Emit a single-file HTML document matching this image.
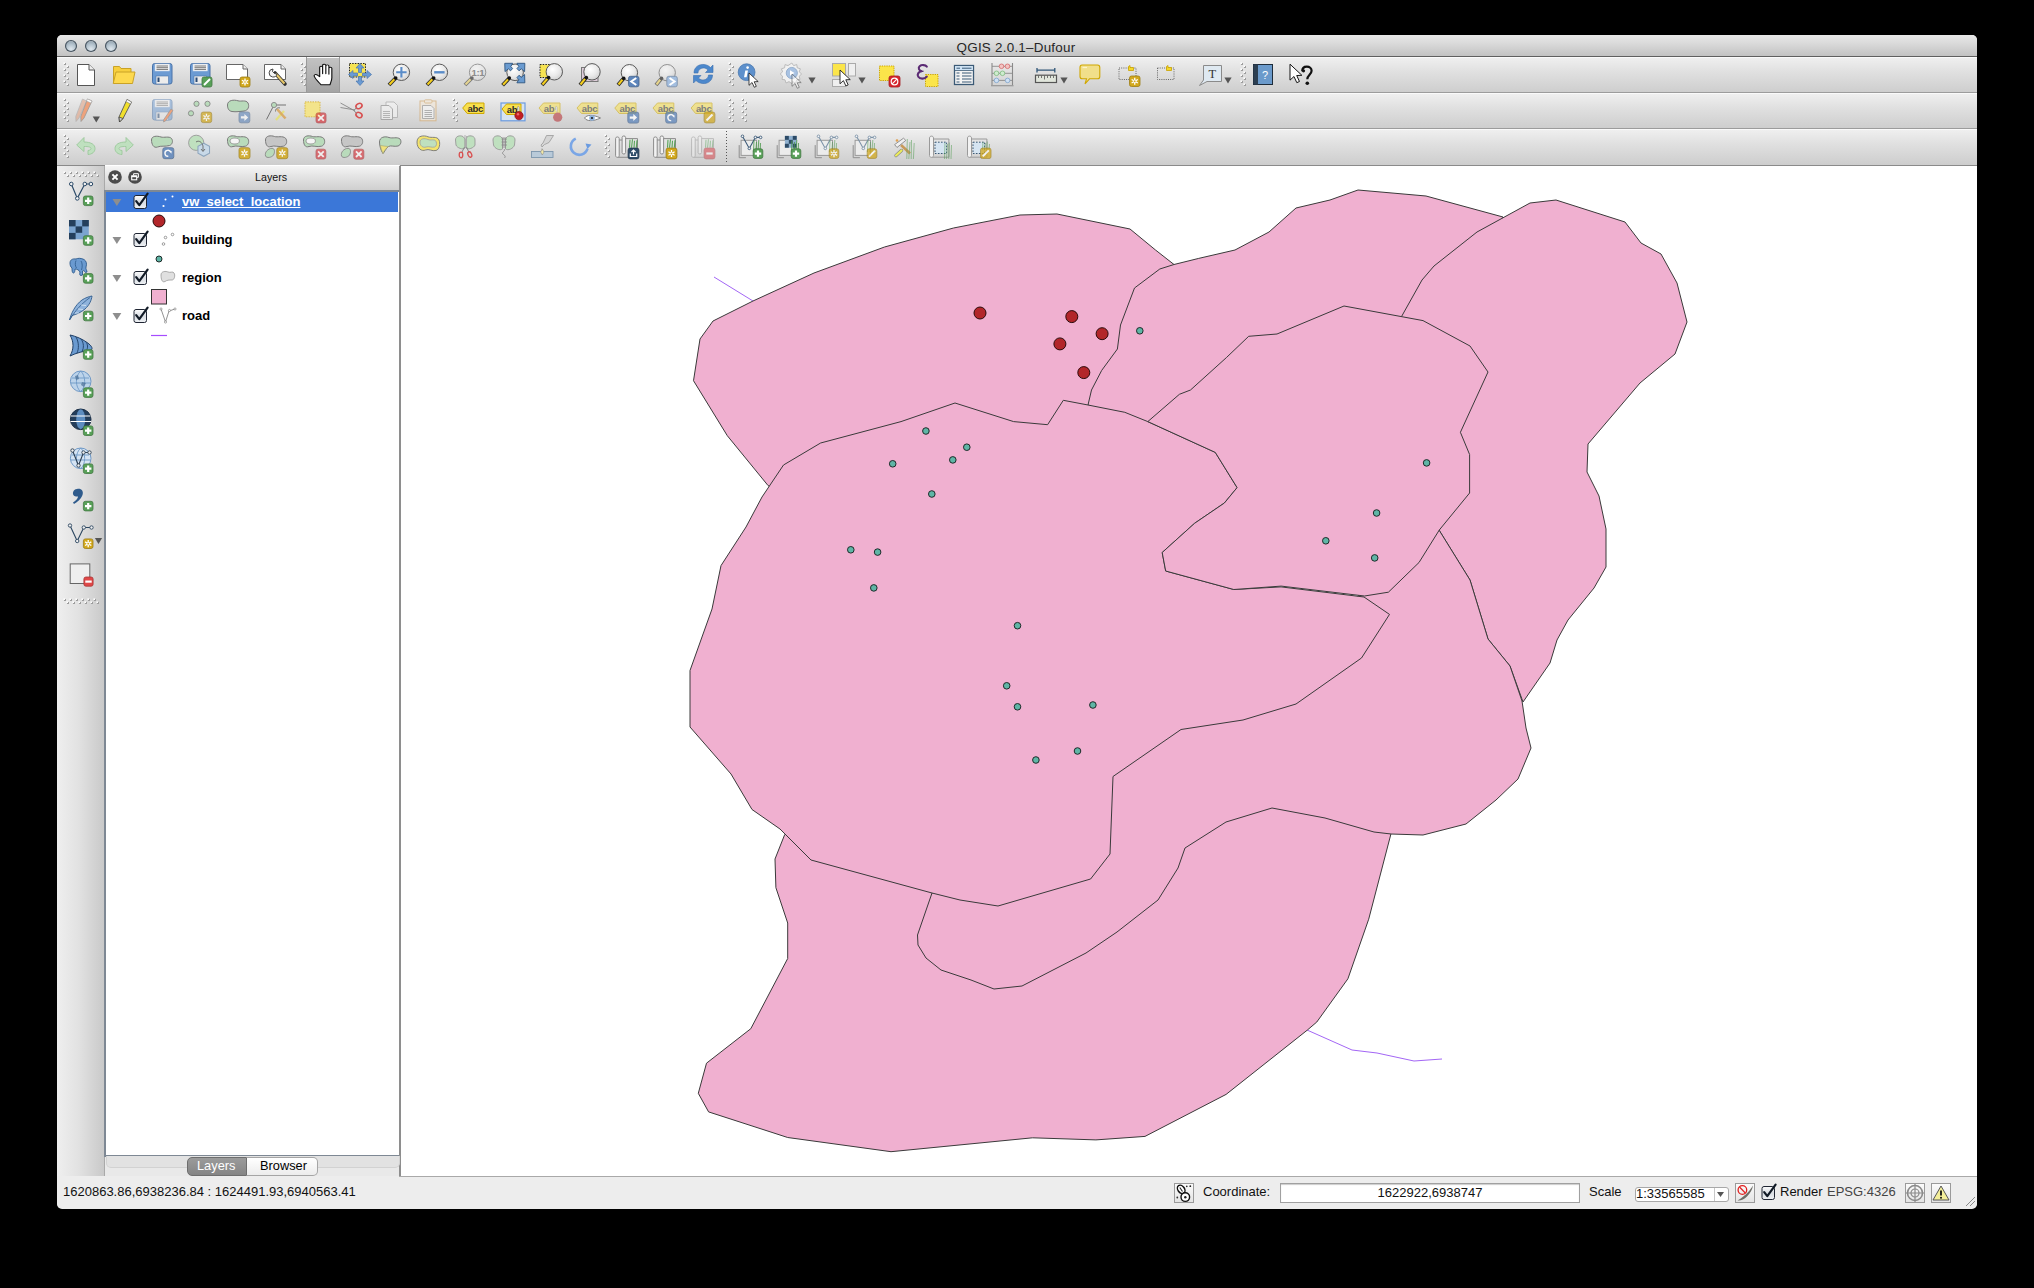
<!DOCTYPE html><html><head><meta charset="utf-8"><style>
html,body{margin:0;padding:0;background:#000;width:2034px;height:1288px;overflow:hidden;font-family:"Liberation Sans",sans-serif;}
.a{position:absolute;}
#win{position:absolute;left:57px;top:35px;width:1920px;height:1173px;background:#e9e9e9;border-radius:5px 5px 5px 5px;overflow:hidden;}
#title{left:57px;top:35px;width:1920px;height:21px;background:linear-gradient(#e8e8e8,#d8d8d8 45%,#c2c2c2);border-bottom:1px solid #5f5f5f;border-radius:5px 5px 0 0;}
#title .t{position:absolute;left:0;width:1918px;top:5px;text-align:center;font-size:13.4px;letter-spacing:0.25px;color:#252525;}
.tl{position:absolute;top:5px;width:12px;height:12px;border-radius:50%;background:radial-gradient(circle at 50% 75%,#dfe7ee 0,#b3c2cd 45%,#8797a4 85%);box-shadow:inset 0 0 0 1.1px #47535e, inset 0 2px 1px -1px #e8f0f4;}
.tb{left:57px;width:1920px;height:35px;background:linear-gradient(#efefef,#e0e0e0 40%,#cdcdcd);border-top:1px solid #fafafa;}
.tbl{left:57px;width:1920px;height:1px;background:#9c9c9c;}
#map{left:401px;top:166px;width:1576px;height:1010px;background:#fff;overflow:hidden;}
#ltb{left:57px;top:166px;width:47px;height:1010px;background:linear-gradient(90deg,#efefef,#e2e2e2 45%,#c9c9c9);}
#dock{left:105px;top:165px;width:295px;height:1011px;background:#e9e9e9;}
#dtitle{left:105px;top:165px;width:294px;height:25px;background:linear-gradient(#f7f7f7,#e6e6e6 40%,#cfcfcf);}
#list{left:104px;top:190px;width:293px;height:963px;background:#fff;border:1px solid #7e8894;border-width:2px 2px 2px 2px;}
#status{left:57px;top:1176px;width:1920px;height:33px;background:#ededed;border-radius:0 0 5px 5px;}
.txt{position:absolute;font-size:13px;color:#111;white-space:nowrap;}
.row{position:absolute;left:182px;font-size:13px;font-weight:bold;color:#000;white-space:nowrap;}
.btn{position:absolute;border:1px solid #9a9a9a;background:linear-gradient(#fbfbfb,#e4e4e4);box-sizing:border-box;}
</style></head><body>
<div id="win"></div>
<div class="a" id="title"><div class="t">QGIS 2.0.1–Dufour</div></div>
<div class="tl" style="left:65px;top:40px"></div>
<div class="tl" style="left:85px;top:40px"></div>
<div class="tl" style="left:105px;top:40px"></div>
<div class="a tb" style="top:57px"></div>
<div class="a tbl" style="top:92px"></div>
<div class="a tb" style="top:93px"></div>
<div class="a tbl" style="top:128px"></div>
<div class="a tb" style="top:129px"></div>
<div class="a" style="left:57px;top:165px;width:1920px;height:1px;background:#8a8a8a"></div>
<div class="a" id="ltb"></div>
<div class="a" style="left:104px;top:166px;width:1px;height:1010px;background:#a9a9a9"></div>
<div class="a" id="dock"></div>
<div class="a" id="dtitle"><div class="txt" style="left:150px;top:6px;font-size:10.7px;">Layers</div></div>
<div class="a" style="left:105px;top:165px;width:294px;height:1px;background:#fff"></div>
<div class="a" id="list"></div>
<div class="a" style="left:106px;top:192px;width:292px;height:20px;background:#3b77d8"></div>
<div class="a" style="left:399px;top:166px;width:2px;height:1011px;background:#8e8e8e"></div>
<div class="a" id="map">
  <svg width="1576" height="1010" viewBox="401 166 1576 1010" style="position:absolute;left:0;top:0">
    <g fill="none" stroke="#a366f5" stroke-width="1">
      <polyline points="714,277 753,301 800,330"/>
      <polyline points="1280,1010 1307,1030 1352,1050 1377,1053 1414,1061 1442,1059"/>
    </g>
    <g fill="#f0b0d0" stroke="#3a3a3a" stroke-width="1" stroke-linejoin="round">
      <polygon points="784.7,834.6 775,859 775.9,887.7 787.7,923 787.7,958.5 750.8,1028.7 706.5,1063.2 698.3,1093.3 708.6,1111.9 787.7,1137.5 891,1151.7 1032.5,1137.8 1095.9,1139.9 1145,1136.4 1226.1,1094.4 1307.2,1030.2 1316.8,1022 1347.9,978.8 1368.7,919.2 1391,833.7 1300,800 1000,860 800,830"/>
      <polygon points="713,321 753,301 814,273 884.5,247 953.5,228 1020,215 1057,214 1130,229 1155.5,250 1174,264.5 1100,450 790,500 768,485.5 727.3,435.7 693.5,380.7 700,339"/>
      <polygon points="1088,405 1091.5,390 1101.7,370.4 1117.4,349 1120.5,325 1134.5,288 1159.8,269 1174,264.5 1198.7,258.4 1235,250 1269,232 1296,208 1330,200 1358,190 1426,196 1503,217 1480,300 1300,380 1150,440"/>
      <polygon points="1401.5,316.6 1422,280 1434,266 1477,232 1530,203 1556,200 1625,222 1641,243 1661,254 1677,283 1687,322 1675,354 1640,383 1588,444 1587,472 1599,496 1606,529 1606,567 1594,588 1568,620 1557,640 1550,663 1523,702 1510,666 1488,639 1470,580 1439,530 1400,450 1390,340"/>
      <polygon points="1439,530 1470,580 1488,639 1510,666 1522,701 1526,728 1531,748 1518,779 1496,800 1466,824 1423,835 1391,834 1374,832 1325,818 1272,808 1226,822 1185,848 1178,868 1158,900 1117,932 1086,953 1022,986 994,989 971,980 941,970 926,958 918,945 917.5,935 932,893 1000,870 1080,760 1250,690 1330,620 1400,560"/>
      <polygon points="1147.8,421.6 1215.3,452.4 1237.1,487.6 1224.4,503 1194.6,523.3 1162.2,552.5 1165.7,571 1233.8,589.5 1281,586.9 1364,597 1389.5,614.4 1361.5,658 1296,704 1243,720 1181,729.5 1113,776.5 1110,854 1090.6,879 998,906 960,900 932,893 811,860 780,829 752,809.5 731,774 690,727 690,670.5 712,609 721,565.6 746,527 762,497 783.5,465 820.6,443 901,421.6 955,403 1013.6,421.6 1047.6,424.7 1063.3,400.3 1088,405 1124.8,412.3"/>
      <polygon points="1147.8,421.6 1179.4,394.3 1190.5,390 1226.4,357.6 1248.7,336.3 1277,334 1344,306 1423,320.6 1470,346 1488,372 1460.4,432.3 1469.6,454.5 1469.6,493 1439.3,530 1419,562.5 1388.4,592.2 1364.5,596 1281.2,586.1 1233.8,589.5 1165.7,571 1162.2,552.5 1194.6,523.3 1224.4,503 1237.1,487.6 1215.3,452.4"/>
    </g>
    <g fill="#5fb5a6" stroke="#1e2a28" stroke-width="1">
      <circle cx="1139.8" cy="330.8" r="3.3"/><circle cx="925.9" cy="431" r="3.3"/><circle cx="966.8" cy="447.2" r="3.3"/>
      <circle cx="892.7" cy="463.8" r="3.3"/><circle cx="952.8" cy="459.9" r="3.3"/><circle cx="931.8" cy="494" r="3.3"/>
      <circle cx="850.8" cy="549.8" r="3.3"/><circle cx="877.6" cy="552.1" r="3.3"/><circle cx="873.8" cy="587.9" r="3.3"/>
      <circle cx="1017.5" cy="625.7" r="3.3"/><circle cx="1006.7" cy="685.8" r="3.3"/><circle cx="1017.5" cy="706.8" r="3.3"/>
      <circle cx="1092.9" cy="705" r="3.3"/><circle cx="1077.5" cy="751" r="3.3"/><circle cx="1035.9" cy="760" r="3.3"/>
      <circle cx="1426.6" cy="462.9" r="3.3"/><circle cx="1376.6" cy="513" r="3.3"/><circle cx="1325.8" cy="540.8" r="3.3"/>
      <circle cx="1374.7" cy="557.9" r="3.3"/>
    </g>
    <g fill="#b2262a" stroke="#2a0a0a" stroke-width="1">
      <circle cx="980" cy="313" r="6"/><circle cx="1071.8" cy="316.6" r="6"/><circle cx="1102.1" cy="333.7" r="6"/>
      <circle cx="1059.9" cy="343.9" r="6"/><circle cx="1083.8" cy="372.6" r="6"/>
    </g>
  </svg>
</div>
<div class="a" style="left:106px;top:1156px;width:292px;height:11px;background:#e2e2e2;border:1px solid #d2d2d2;border-top:none;border-radius:0 0 5px 5px;"></div>
<div class="a" style="left:187px;top:1157px;width:60px;height:19px;background:linear-gradient(#9b9b9b,#858585);border:1px solid #6e6e6e;border-radius:5px 0 0 5px;box-sizing:border-box;"></div>
<div class="a" style="left:247px;top:1157px;width:71px;height:19px;background:linear-gradient(#ffffff,#ececec);border:1px solid #a5a5a5;border-left:none;border-radius:0 5px 5px 0;box-sizing:border-box;"></div>
<div class="txt" style="left:197px;top:1158px;color:#fff;font-size:12.8px;">Layers</div>
<div class="txt" style="left:260px;top:1158px;color:#000;font-size:12.8px;">Browser</div>
<div class="a" id="status"></div>
<div class="a" style="left:399px;top:1176px;width:1578px;height:1px;background:#a9a9a9"></div>
<div class="txt" style="left:63px;top:1184px;">1620863.86,6938236.84 : 1624491.93,6940563.41</div>
<div class="btn" style="left:1174px;top:1183px;width:20px;height:20px;"></div>
<div class="txt" style="left:1203px;top:1184px;">Coordinate:</div>
<div class="a" style="left:1280px;top:1183px;width:300px;height:20px;background:#fff;border:1px solid #a0a0a0;box-sizing:border-box;box-shadow:inset 0 1px 1px #ccc;"></div>
<div class="txt" style="left:1280px;width:300px;text-align:center;top:1185px;">1622922,6938747</div>
<div class="txt" style="left:1589px;top:1184px;">Scale</div>
<div class="a" style="left:1635px;top:1187px;width:94px;height:15px;background:#fff;border:1px solid #a8a8a8;border-radius:3px;box-sizing:border-box;"></div>
<div class="a" style="left:1714px;top:1188px;width:1px;height:13px;background:#c8c8c8"></div>
<div class="txt" style="left:1636px;top:1186px;font-size:13px;">1:33565585</div>
<div class="btn" style="left:1735px;top:1183px;width:20px;height:20px;"></div>
<div class="txt" style="left:1780px;top:1184px;">Render</div>
<div class="txt" style="left:1827px;top:1184px;color:#444;">EPSG:4326</div>
<div class="btn" style="left:1905px;top:1183px;width:20px;height:20px;"></div>
<div class="btn" style="left:1931px;top:1183px;width:20px;height:20px;"></div>
<div class="row" style="top:194px;color:#fff;text-decoration:underline;">vw_select_location</div>
<div class="row" style="top:232px;">building</div>
<div class="row" style="top:270px;">region</div>
<div class="row" style="top:308px;">road</div>
<svg class="a" style="left:0;top:0" width="2034" height="1288" viewBox="0 0 2034 1288" overflow="visible">
<defs><radialGradient id="lensg" cx="0.4" cy="0.35" r="0.7"><stop offset="0" stop-color="#ffffff"/><stop offset="0.6" stop-color="#e9e9e9"/><stop offset="1" stop-color="#cfcfcf"/></radialGradient><linearGradient id="pressg" x1="0" y1="0" x2="0" y2="1"><stop offset="0" stop-color="#c2c2c2"/><stop offset="1" stop-color="#a4a4a4"/></linearGradient><linearGradient id="chkg" x1="0" y1="0" x2="0" y2="1"><stop offset="0" stop-color="#fdfdfd"/><stop offset="0.5" stop-color="#d9dde3"/><stop offset="1" stop-color="#eef1f4"/></linearGradient></defs>
<rect x="64" y="63" width="2" height="2" fill="#9d9d9d"/><rect x="63.4" y="62.4" width="1.6" height="1.6" fill="#fdfdfd"/><rect x="67" y="66" width="2" height="2" fill="#9d9d9d"/><rect x="66.4" y="65.4" width="1.6" height="1.6" fill="#fdfdfd"/><rect x="64" y="69" width="2" height="2" fill="#9d9d9d"/><rect x="63.4" y="68.4" width="1.6" height="1.6" fill="#fdfdfd"/><rect x="67" y="72" width="2" height="2" fill="#9d9d9d"/><rect x="66.4" y="71.4" width="1.6" height="1.6" fill="#fdfdfd"/><rect x="64" y="75" width="2" height="2" fill="#9d9d9d"/><rect x="63.4" y="74.4" width="1.6" height="1.6" fill="#fdfdfd"/><rect x="67" y="78" width="2" height="2" fill="#9d9d9d"/><rect x="66.4" y="77.4" width="1.6" height="1.6" fill="#fdfdfd"/><rect x="64" y="81" width="2" height="2" fill="#9d9d9d"/><rect x="63.4" y="80.4" width="1.6" height="1.6" fill="#fdfdfd"/><rect x="67" y="84" width="2" height="2" fill="#9d9d9d"/><rect x="66.4" y="83.4" width="1.6" height="1.6" fill="#fdfdfd"/><g transform="translate(74,62)"><path d="M3.5 2.5H15L20.5 8V23.5H3.5Z" fill="#fff" stroke="#555" stroke-width="1"/><path d="M15 2.5V8H20.5" fill="#eee" stroke="#555" stroke-width="1"/></g>
<g transform="translate(112,62)"><path d="M1.5 21V4.5H7.5L9 6.5H19V10" fill="#f7cf3e" stroke="#c9a227" stroke-width="1"/><path d="M4 10H23L20.5 21.5H1.2Z" fill="#fdd94f" stroke="#c9a227" stroke-width="1"/></g>
<g transform="translate(150,62)"><rect x="2.5" y="1.5" width="19.5" height="20.5" rx="2.2" fill="#6c9bd3" stroke="#4a73a8" stroke-width="1"/><rect x="5" y="2" width="14.5" height="7" fill="#f4f4f4" stroke="#c9d6e5" stroke-width="0.5"/><path d="M6.5 4H18M6.5 5.7H18M6.5 7.4H18" stroke="#555" stroke-width="0.8"/><rect x="6" y="14" width="12.5" height="8" fill="#ececec" stroke="#4a73a8" stroke-width="0.6"/><rect x="7.5" y="15.5" width="2" height="4.5" fill="#2a4a75"/></g>
<g transform="translate(188,62)"><rect x="2.5" y="1.5" width="19.5" height="20.5" rx="2.2" fill="#6c9bd3" stroke="#4a73a8" stroke-width="1"/><rect x="5" y="2" width="14.5" height="7" fill="#f4f4f4" stroke="#c9d6e5" stroke-width="0.5"/><path d="M6.5 4H18M6.5 5.7H18M6.5 7.4H18" stroke="#555" stroke-width="0.8"/><rect x="6" y="14" width="12.5" height="8" fill="#ececec" stroke="#4a73a8" stroke-width="0.6"/><rect x="7.5" y="15.5" width="2" height="4.5" fill="#2a4a75"/><rect x="14" y="15" width="10" height="10" rx="2" fill="#58a058" stroke="#427842" stroke-width="0.8"/><path d="M16.0 23.0L22.0 17.0" stroke="#fff" stroke-width="2"/></g>
<g transform="translate(225,62)"><path d="M1.5 2.5H18L22.5 7V17.5H1.5Z" fill="#fff" stroke="#666" stroke-width="1"/><path d="M18 2.5V7H22.5" fill="#eee" stroke="#666" stroke-width="1"/><rect x="15" y="15" width="10" height="10" rx="2" fill="#d2a81c" stroke="#9d7e15" stroke-width="0.8"/><path d="M20.0 16.4V23.6M16.9 18.2L23.1 21.8M16.9 21.8L23.1 18.2" stroke="#fff" stroke-width="1.3"/><circle cx="20.0" cy="20.0" r="1.3" fill="#d2a81c" stroke="#fff" stroke-width="0.8"/></g>
<g transform="translate(263,62)"><path d="M1.5 2.5H18L22.5 7V17.5H1.5Z" fill="#fff" stroke="#666" stroke-width="1"/><path d="M18 2.5V7H22.5" fill="#eee" stroke="#666" stroke-width="1"/><path d="M12 11L22 22" stroke="#333" stroke-width="3.6" stroke-linecap="round"/><path d="M12.5 11.5L21.5 21.5" stroke="#e8c96a" stroke-width="2"/><path d="M14 12A4 4 0 1 1 10 7L9.5 9.5L11.5 11.5L14 12Z" fill="#f3f3f3" stroke="#444" stroke-width="1"/></g>
<rect x="301" y="63" width="2" height="2" fill="#9d9d9d"/><rect x="300.4" y="62.4" width="1.6" height="1.6" fill="#fdfdfd"/><rect x="304" y="66" width="2" height="2" fill="#9d9d9d"/><rect x="303.4" y="65.4" width="1.6" height="1.6" fill="#fdfdfd"/><rect x="301" y="69" width="2" height="2" fill="#9d9d9d"/><rect x="300.4" y="68.4" width="1.6" height="1.6" fill="#fdfdfd"/><rect x="304" y="72" width="2" height="2" fill="#9d9d9d"/><rect x="303.4" y="71.4" width="1.6" height="1.6" fill="#fdfdfd"/><rect x="301" y="75" width="2" height="2" fill="#9d9d9d"/><rect x="300.4" y="74.4" width="1.6" height="1.6" fill="#fdfdfd"/><rect x="304" y="78" width="2" height="2" fill="#9d9d9d"/><rect x="303.4" y="77.4" width="1.6" height="1.6" fill="#fdfdfd"/><rect x="301" y="81" width="2" height="2" fill="#9d9d9d"/><rect x="300.4" y="80.4" width="1.6" height="1.6" fill="#fdfdfd"/><rect x="304" y="84" width="2" height="2" fill="#9d9d9d"/><rect x="303.4" y="83.4" width="1.6" height="1.6" fill="#fdfdfd"/><rect x="306" y="58" width="34" height="34" fill="url(#pressg)"/><rect x="306" y="57" width="1" height="35" fill="#9a9a9a"/><rect x="339" y="57" width="1" height="35" fill="#9a9a9a"/>
<g transform="translate(311,62)"><path transform="translate(1,0.8) scale(1.28,1.0)" d="M7 22C5 19 2.5 16 1.8 13.5C1.2 11.8 3 11 4.3 12.3L6 14V4.5C6 3 8.3 3 8.3 4.5V11V2.5C8.3 1 10.8 1 10.8 2.5V11V3.2C10.8 1.7 13.2 1.7 13.2 3.2V11.5V5.5C13.2 4 15.5 4 15.5 5.5V15C15.5 18 14.5 20 14 22Z" fill="#fff" stroke="#111" stroke-width="0.9" stroke-linejoin="round"/></g>
<g transform="translate(348,62)"><rect x="1.5" y="1.5" width="16" height="13.5" fill="#f6e352" stroke="#222" stroke-width="1" stroke-dasharray="1.5 1.2"/><path d="M12 1.5L16 6H13.5V10.5H10.5V6H8Z M12 23.5L16 19H13.5V14.5H10.5V19H8Z M0.5 12.5L5 8.5V11H9.5V14H5V16.5Z M23.5 12.5L19 8.5V11H14.5V14H19V16.5Z" fill="#6a9bd3" stroke="#4a76ad" stroke-width="0.7"/></g>
<g transform="translate(386,62)"><line x1="9.988" y1="15.712" x2="3" y2="23" stroke="#2a2a2a" stroke-width="3.8"/><line x1="8.388" y1="17.312" x2="3.5" y2="22.5" stroke="#f5cf1f" stroke-width="2.1"/><circle cx="15.4" cy="10.3" r="8.2" fill="url(#lensg)" stroke="#5a5a5a" stroke-width="1"/><circle cx="9.788" cy="15.911999999999999" r="1.7" fill="#111"/><path d="M10.2 10.3H20.6M15.4 5.1V15.5" stroke="#5a8cc8" stroke-width="2.1"/></g>
<g transform="translate(424,62)"><line x1="9.988" y1="15.712" x2="3" y2="23" stroke="#2a2a2a" stroke-width="3.8"/><line x1="8.388" y1="17.312" x2="3.5" y2="22.5" stroke="#f5cf1f" stroke-width="2.1"/><circle cx="15.4" cy="10.3" r="8.2" fill="url(#lensg)" stroke="#5a5a5a" stroke-width="1"/><circle cx="9.788" cy="15.911999999999999" r="1.7" fill="#111"/><path d="M10.2 10.3H20.6" stroke="#5a8cc8" stroke-width="2.4"/></g>
<g transform="translate(462,62)"><g opacity="0.55"><line x1="10.187999999999999" y1="15.712" x2="3" y2="23" stroke="#2a2a2a" stroke-width="3.8"/><line x1="8.588" y1="17.312" x2="3.5" y2="22.5" stroke="#f2d35a" stroke-width="2.1"/><circle cx="15.6" cy="10.3" r="8.2" fill="url(#lensg)" stroke="#5a5a5a" stroke-width="1"/><circle cx="9.988" cy="15.911999999999999" r="1.7" fill="#111"/></g><text x="9.6" y="14.2" font-family="Liberation Sans" font-weight="bold" font-size="9.6" fill="#8c8c8c" letter-spacing="-0.4">1:1</text></g>
<g transform="translate(501,62)"><line x1="8.622" y1="15.778000000000002" x2="1.6" y2="23.2" stroke="#2a2a2a" stroke-width="3.8"/><line x1="7.022" y1="17.378000000000004" x2="2.1" y2="22.7" stroke="#f5cf1f" stroke-width="2.1"/><circle cx="14.1" cy="10.3" r="8.3" fill="url(#lensg)" stroke="#5a5a5a" stroke-width="1"/><circle cx="8.422" cy="15.978000000000002" r="1.7" fill="#111"/><path d="M3.75 1.3H11.7L9.8 4.5L11.6 6.5L9.6 8.8L7.3 6.8L4 9.6Z M23.85 1.3H15.9L17.8 4.5L16 6.5L18 8.8L20.3 6.8L23.6 9.6Z M23.85 20.8H15.9L17.8 17.6L16 15.6L18 13.3L20.3 15.3L23.6 12.5Z" fill="#6a9bd0" stroke="#2f5680" stroke-width="0.9" stroke-linejoin="round"/></g>
<g transform="translate(539,62)"><rect x="1" y="2.5" width="18.5" height="13" fill="#f6e352" stroke="#222" stroke-width="1" stroke-dasharray="1.5 1.2"/><line x1="9.888000000000002" y1="15.212" x2="3" y2="23" stroke="#2a2a2a" stroke-width="3.8"/><line x1="8.288000000000002" y1="16.812" x2="3.5" y2="22.5" stroke="#f5cf1f" stroke-width="2.1"/><circle cx="15.3" cy="9.8" r="8.2" fill="url(#lensg)" stroke="#5a5a5a" stroke-width="1"/><circle cx="9.688000000000002" cy="15.411999999999999" r="1.7" fill="#111"/></g>
<g transform="translate(577,62)"><rect x="4.5" y="5.5" width="16.5" height="14" fill="#dccbd8" stroke="#777" stroke-width="1"/><line x1="9.588000000000001" y1="15.212" x2="3" y2="23" stroke="#2a2a2a" stroke-width="3.8"/><line x1="7.988000000000001" y1="16.812" x2="3.5" y2="22.5" stroke="#f5cf1f" stroke-width="2.1"/><circle cx="15" cy="9.8" r="8.2" fill="url(#lensg)" stroke="#5a5a5a" stroke-width="1"/><circle cx="9.388000000000002" cy="15.411999999999999" r="1.7" fill="#111"/></g>
<g transform="translate(615,62)"><line x1="8.988" y1="16.112" x2="3" y2="23" stroke="#2a2a2a" stroke-width="3.8"/><line x1="7.388" y1="17.712" x2="3.5" y2="22.5" stroke="#f5cf1f" stroke-width="2.1"/><circle cx="14.4" cy="10.7" r="8.2" fill="url(#lensg)" stroke="#5a5a5a" stroke-width="1"/><circle cx="8.788" cy="16.311999999999998" r="1.7" fill="#111"/><rect x="13.5" y="14.3" width="10.5" height="10.5" rx="2" fill="#5d85bb" stroke="#45638c" stroke-width="0.8"/><path d="M21.25 16.05L16.25 19.55L21.25 23.05" fill="none" stroke="#fff" stroke-width="2"/></g>
<g transform="translate(653,62)"><g opacity="0.6"><line x1="8.788" y1="16.112" x2="3" y2="23" stroke="#2a2a2a" stroke-width="3.8"/><line x1="7.188000000000001" y1="17.712" x2="3.5" y2="22.5" stroke="#f2d35a" stroke-width="2.1"/><circle cx="14.2" cy="10.7" r="8.2" fill="url(#lensg)" stroke="#5a5a5a" stroke-width="1"/><circle cx="8.588000000000001" cy="16.311999999999998" r="1.7" fill="#111"/></g><rect x="13.8" y="14.3" width="10.5" height="10.5" rx="2" fill="#a3bedf" stroke="#7a8ea7" stroke-width="0.8"/><path d="M16.55 16.05L21.55 19.55L16.55 23.05" fill="none" stroke="#fff" stroke-width="2"/></g>
<g transform="translate(691,62)"><path d="M3 11C3 5 8 2 13 2.5C16 2.8 18 4 19.5 5.5L22 3V10.5H14.5L17 8C15.5 6.5 14 6 12.5 6C9 6 7 8.5 7 11Z" fill="#4c88cc" stroke="#3a6fb0" stroke-width="0.6"/><path d="M21.5 13C21.5 19 16.5 22 11.5 21.5C8.5 21.2 6.5 20 5 18.5L2.5 21V13.5H10L7.5 16C9 17.5 10.5 18 12 18C15.5 18 17.5 15.5 17.5 13Z" fill="#4c88cc" stroke="#3a6fb0" stroke-width="0.6"/></g>
<rect x="729" y="63" width="2" height="2" fill="#9d9d9d"/><rect x="728.4" y="62.4" width="1.6" height="1.6" fill="#fdfdfd"/><rect x="732" y="66" width="2" height="2" fill="#9d9d9d"/><rect x="731.4" y="65.4" width="1.6" height="1.6" fill="#fdfdfd"/><rect x="729" y="69" width="2" height="2" fill="#9d9d9d"/><rect x="728.4" y="68.4" width="1.6" height="1.6" fill="#fdfdfd"/><rect x="732" y="72" width="2" height="2" fill="#9d9d9d"/><rect x="731.4" y="71.4" width="1.6" height="1.6" fill="#fdfdfd"/><rect x="729" y="75" width="2" height="2" fill="#9d9d9d"/><rect x="728.4" y="74.4" width="1.6" height="1.6" fill="#fdfdfd"/><rect x="732" y="78" width="2" height="2" fill="#9d9d9d"/><rect x="731.4" y="77.4" width="1.6" height="1.6" fill="#fdfdfd"/><rect x="729" y="81" width="2" height="2" fill="#9d9d9d"/><rect x="728.4" y="80.4" width="1.6" height="1.6" fill="#fdfdfd"/><rect x="732" y="84" width="2" height="2" fill="#9d9d9d"/><rect x="731.4" y="83.4" width="1.6" height="1.6" fill="#fdfdfd"/><g transform="translate(735,62)"><circle cx="11.6" cy="10.2" r="8.4" fill="#5d90cc" stroke="#4a78b0" stroke-width="0.8"/><path d="M10.3 8.5H13L11.6 15.2H9Z" fill="#fff"/><circle cx="12.6" cy="5.6" r="1.3" fill="#fff"/><path transform="translate(14,11) scale(0.85)" d="M0 0L0 14.5L3.6 11.2L6.2 16.8L8.6 15.7L6.1 10.3L10.8 10.1Z" fill="#fff" stroke="#111" stroke-width="0.9" stroke-linejoin="round"/></g>
<g transform="translate(780,62)"><path d="M11.8 1L13.6 3.6L16.8 2.6L17.2 5.8L20.4 6.8L19.2 9.8L21.6 12L19.2 14.2L20 17.4L16.8 17.8L15.6 21L12.6 19.6L11.8 21.6L9 19.6L6 21L5 17.8L2 17.4L2.6 14.2L0.2 12L2.6 9.8L1.4 6.8L4.6 5.8L5 2.6L8 3.6Z" fill="#f1f1f1" stroke="#b5b5b5" stroke-width="0.9"/><circle cx="11.8" cy="11" r="5.6" fill="#a8c2e2" stroke="#8aa6c8" stroke-width="0.8"/><path d="M10 8.2L14.5 11L10 13.8Z" fill="#fff"/><g opacity="0.5"><path transform="translate(12,12) scale(0.85)" d="M0 0L0 14.5L3.6 11.2L6.2 16.8L8.6 15.7L6.1 10.3L10.8 10.1Z" fill="#fff" stroke="#111" stroke-width="0.9" stroke-linejoin="round"/></g></g>
<path d="M808.4 77.4H815.6L812 83.4Z" fill="#555"/><g transform="translate(831,62)"><rect x="1.5" y="1.5" width="13" height="12.5" fill="#fbe54a" stroke="#aaa" stroke-width="1"/><rect x="17.5" y="1.5" width="7" height="12.5" fill="#efefef" stroke="#aaa" stroke-width="1"/><rect x="1.5" y="17.5" width="13" height="7" fill="#efefef" stroke="#aaa" stroke-width="1"/><path transform="translate(9,8) scale(0.95)" d="M0 0L0 14.5L3.6 11.2L6.2 16.8L8.6 15.7L6.1 10.3L10.8 10.1Z" fill="#fff" stroke="#111" stroke-width="0.9" stroke-linejoin="round"/></g>
<path d="M858.4 77.4H865.6L862 83.4Z" fill="#555"/><g transform="translate(877,62)"><rect x="2.5" y="4" width="14.5" height="14.5" fill="#fbe54a" stroke="#cda600" stroke-width="1" stroke-dasharray="1.3 1"/><rect x="12" y="14" width="11" height="11" rx="2" fill="#d8262e" stroke="#a21c22" stroke-width="0.8"/><circle cx="17.5" cy="19.5" r="3.3" fill="none" stroke="#fff" stroke-width="1.2"/><path d="M15.2 21.8L19.8 17.2" stroke="#fff" stroke-width="1.2"/></g>
<g transform="translate(915,62)"><rect x="10.5" y="12.5" width="12.5" height="12" fill="#fbe54a" stroke="#cda600" stroke-width="1" stroke-dasharray="1.3 1"/><path d="M11.8 4.6C10.5 2.8 6.5 2.5 4.6 4.2C3 5.7 3.8 8.6 6.8 9.3C3.2 9.8 1.8 12.5 3.3 14.8C5 17.3 9.8 17.2 11.8 14.6" fill="none" stroke="#5b2b74" stroke-width="2.1" stroke-linecap="round"/><path d="M6.5 9.3H8.5" stroke="#5b2b74" stroke-width="1.4"/></g>
<g transform="translate(952,62)"><rect x="2.5" y="3.5" width="19" height="19" fill="#f4f4f4" stroke="#3b5a76" stroke-width="1.3"/><rect x="3.2" y="4.2" width="17.6" height="4" fill="#cde3f6"/><path d="M4.5 6.2H8M10 6.2H19.5M4.5 11H7.5M10 11H19.5M4.5 14H7.5M10 14H19.5M4.5 17H7.5M10 17H19.5M4.5 20H7.5M10 20H19.5" stroke="#3b5a76" stroke-width="1"/><path d="M3 8.5H21" stroke="#3b5a76" stroke-width="0.8"/></g>
<g transform="translate(990,62)"><path d="M2 1V23M22.5 1V23M1 23.8H23.5" stroke="#8a8a8a" stroke-width="1.1" fill="none"/><path d="M2 4.3H22.5M2 11.3H22.5M2 18.4H22.5" stroke="#8a8a8a" stroke-width="0.9"/><circle cx="11.5" cy="4.3" r="2.3" fill="#f3c4c4" stroke="#d46a6a" stroke-width="0.8"/><circle cx="17.5" cy="4.3" r="2.3" fill="#f3c4c4" stroke="#d46a6a" stroke-width="0.8"/><circle cx="6.5" cy="11.3" r="2.3" fill="#cfeccf" stroke="#7fba7f" stroke-width="0.8"/><circle cx="12.5" cy="11.3" r="2.3" fill="#cfeccf" stroke="#7fba7f" stroke-width="0.8"/><circle cx="6.5" cy="18.4" r="2.3" fill="#cfe0f3" stroke="#7ea3cc" stroke-width="0.8"/><circle cx="17.6" cy="18.4" r="2.3" fill="#cfe0f3" stroke="#7ea3cc" stroke-width="0.8"/></g>
<g transform="translate(1034,62)"><path d="M3 6V10.5M20.8 6V10.5M3 8.2H20.8" stroke="#2f5577" stroke-width="1.3"/><rect x="1.5" y="13.2" width="21" height="7.3" fill="#e1e6dc" stroke="#555" stroke-width="1.2"/><path d="M4.5 13.5V16M7.5 13.5V16M10.5 13.5V17.5M13.5 13.5V16M16.5 13.5V16M19.5 13.5V16" stroke="#555" stroke-width="0.8"/></g>
<path d="M1060.4 77.4H1067.6L1064 83.4Z" fill="#555"/><g transform="translate(1078,62)"><path d="M4 3H19.5C21 3 21.8 4 21.8 5.5V14.5C21.8 16 21 16.8 19.5 16.8H11.5L7 22L8.5 16.8H4.5C3 16.8 2 16 2 14.5V5.5C2 4 3 3 4 3Z" fill="#f1df8a" stroke="#d0a700" stroke-width="1.1"/><path d="M4.5 5.5H9" stroke="#fff8d8" stroke-width="1.3" opacity="0.8"/></g>
<g transform="translate(1117,62)"><rect x="2" y="6" width="17" height="11.5" fill="none" stroke="#666" stroke-width="1" stroke-dasharray="1 1.2"/><path d="M11.5 8.5V4.5L13 3.5V5.5H16.5V8.5Z" fill="#f4d82a" stroke="#c9a200" stroke-width="0.8"/><rect x="12.5" y="14" width="10.5" height="10.5" rx="2" fill="#d2a81c" stroke="#9d7e15" stroke-width="0.8"/><path d="M17.75 15.65V22.85M14.65 17.45L20.85 21.05M14.65 21.05L20.85 17.45" stroke="#fff" stroke-width="1.3"/><circle cx="17.75" cy="19.25" r="1.3" fill="#d2a81c" stroke="#fff" stroke-width="0.8"/></g>
<g transform="translate(1155,62)"><rect x="2.5" y="6" width="16.5" height="11.5" fill="none" stroke="#666" stroke-width="1" stroke-dasharray="1 1.2"/><path d="M11.5 8.5V4.5L13 3.5V5.5H16.5V8.5Z" fill="#f4d82a" stroke="#c9a200" stroke-width="0.8"/></g>
<g transform="translate(1199,62)"><path d="M4.5 3.5H22.5V19.5H8L0.5 23.5L4.5 18Z" fill="#dfe9f1" stroke="#8a8a8a" stroke-width="1"/><text x="9.5" y="16" font-family="Liberation Serif" font-size="12.5" fill="#333">T</text></g>
<path d="M1224.4 77.4H1231.6L1228 83.4Z" fill="#555"/><rect x="1241" y="63" width="2" height="2" fill="#9d9d9d"/><rect x="1240.4" y="62.4" width="1.6" height="1.6" fill="#fdfdfd"/><rect x="1244" y="66" width="2" height="2" fill="#9d9d9d"/><rect x="1243.4" y="65.4" width="1.6" height="1.6" fill="#fdfdfd"/><rect x="1241" y="69" width="2" height="2" fill="#9d9d9d"/><rect x="1240.4" y="68.4" width="1.6" height="1.6" fill="#fdfdfd"/><rect x="1244" y="72" width="2" height="2" fill="#9d9d9d"/><rect x="1243.4" y="71.4" width="1.6" height="1.6" fill="#fdfdfd"/><rect x="1241" y="75" width="2" height="2" fill="#9d9d9d"/><rect x="1240.4" y="74.4" width="1.6" height="1.6" fill="#fdfdfd"/><rect x="1244" y="78" width="2" height="2" fill="#9d9d9d"/><rect x="1243.4" y="77.4" width="1.6" height="1.6" fill="#fdfdfd"/><rect x="1241" y="81" width="2" height="2" fill="#9d9d9d"/><rect x="1240.4" y="80.4" width="1.6" height="1.6" fill="#fdfdfd"/><rect x="1244" y="84" width="2" height="2" fill="#9d9d9d"/><rect x="1243.4" y="83.4" width="1.6" height="1.6" fill="#fdfdfd"/><g transform="translate(1251,62)"><rect x="2.5" y="2.5" width="19" height="20" fill="#6b9acb" stroke="#1e2c3a" stroke-width="1"/><rect x="2.5" y="2.5" width="4.5" height="20" fill="#2c3f52"/><text x="11" y="17" font-family="Liberation Sans" font-size="11" fill="#fff">?</text></g>
<g transform="translate(1289,62)"><path transform="translate(1,2.2) scale(1.1)" d="M0 0L0 14.5L3.6 11.2L6.2 16.8L8.6 15.7L6.1 10.3L10.8 10.1Z" fill="#fff" stroke="#111" stroke-width="0.9" stroke-linejoin="round"/><path d="M13.2 9.2C13.2 6 15.5 4.6 17.8 4.6C20.6 4.6 22.6 6.3 22.6 8.8C22.6 12.5 18.3 13 18.3 17.2" fill="none" stroke="#111" stroke-width="2.2"/><circle cx="18.3" cy="21.2" r="1.8" fill="#111"/><circle cx="14.5" cy="8.8" r="1.6" fill="#111"/></g>
<rect x="64" y="99" width="2" height="2" fill="#9d9d9d"/><rect x="63.4" y="98.4" width="1.6" height="1.6" fill="#fdfdfd"/><rect x="67" y="102" width="2" height="2" fill="#9d9d9d"/><rect x="66.4" y="101.4" width="1.6" height="1.6" fill="#fdfdfd"/><rect x="64" y="105" width="2" height="2" fill="#9d9d9d"/><rect x="63.4" y="104.4" width="1.6" height="1.6" fill="#fdfdfd"/><rect x="67" y="108" width="2" height="2" fill="#9d9d9d"/><rect x="66.4" y="107.4" width="1.6" height="1.6" fill="#fdfdfd"/><rect x="64" y="111" width="2" height="2" fill="#9d9d9d"/><rect x="63.4" y="110.4" width="1.6" height="1.6" fill="#fdfdfd"/><rect x="67" y="114" width="2" height="2" fill="#9d9d9d"/><rect x="66.4" y="113.4" width="1.6" height="1.6" fill="#fdfdfd"/><rect x="64" y="117" width="2" height="2" fill="#9d9d9d"/><rect x="63.4" y="116.4" width="1.6" height="1.6" fill="#fdfdfd"/><rect x="67" y="120" width="2" height="2" fill="#9d9d9d"/><rect x="66.4" y="119.4" width="1.6" height="1.6" fill="#fdfdfd"/><g transform="translate(74,98)"><g opacity="0.55"><path d="M8.5 1L12.5 3L5 20L2 23.5L1.8 18.5Z" fill="#e3a080" stroke="#999" stroke-width="0.8"/></g><path d="M13.5 1L18 3L10 20L7 23.5L6.8 18.5Z" fill="#eea27c" stroke="#999" stroke-width="0.8"/><path d="M13.5 1L18 3L17 5L12.5 3Z" fill="#fff" stroke="#aaa" stroke-width="0.6"/></g>
<path d="M92.7 116.6H99.89999999999999L96.3 122.6Z" fill="#555"/><g transform="translate(112,98)"><path d="M15 1.5L19.5 4L11 20.5L7.5 24L7 19Z" fill="#f1df2c" stroke="#555" stroke-width="0.9"/><path d="M15 1.5L19.5 4L18.5 6L14 3.5Z" fill="#fff" stroke="#777" stroke-width="0.6"/><path d="M7 19L7.5 24L11 20.5Z" fill="#ccc" stroke="#333" stroke-width="0.7"/></g>
<g transform="translate(150,98)"><g opacity="0.5"><rect x="2.5" y="1.5" width="19.5" height="20.5" rx="2.2" fill="#6c9bd3" stroke="#4a73a8" stroke-width="1"/><rect x="5" y="2" width="14.5" height="7" fill="#f4f4f4" stroke="#c9d6e5" stroke-width="0.5"/><path d="M6.5 4H18M6.5 5.7H18M6.5 7.4H18" stroke="#555" stroke-width="0.8"/><rect x="6" y="14" width="12.5" height="8" fill="#ececec" stroke="#4a73a8" stroke-width="0.6"/><rect x="7.5" y="15.5" width="2" height="4.5" fill="#2a4a75"/></g><path d="M21 11L23 12.5L15.5 23L13.5 24L13.8 21.5Z" fill="#eea27c" stroke="#999" stroke-width="0.7"/></g>
<g transform="translate(188,98)"><circle cx="8.5" cy="5.8" r="2.6" fill="#b9dbbb" stroke="#888" stroke-width="0.9"/><circle cx="19.5" cy="5.8" r="2.6" fill="#b9dbbb" stroke="#888" stroke-width="0.9"/><circle cx="3" cy="15.3" r="2.6" fill="#b9dbbb" stroke="#888" stroke-width="0.9"/><g opacity="0.7"><rect x="13.2" y="14.1" width="10.5" height="10.5" rx="2" fill="#d2a81c" stroke="#9d7e15" stroke-width="0.8"/><path d="M18.45 15.750000000000002V22.950000000000003M15.35 17.55L21.55 21.150000000000002M15.35 21.150000000000002L21.55 17.55" stroke="#fff" stroke-width="1.3"/><circle cx="18.45" cy="19.35" r="1.3" fill="#d2a81c" stroke="#fff" stroke-width="0.8"/></g></g>
<g transform="translate(226,98)"><path d="M1.5 7C1.5 2 8 1.5 12 2.8C15 3.8 20 1.5 22 5C23.5 8 22.5 12.5 18 13C14 13.3 10 14.2 6 13.5C2.5 13 1.5 10 1.5 7Z" fill="#b9dbbb" stroke="#7a7a7a" stroke-width="1"/><g opacity="0.6"><rect x="13" y="14" width="10.8" height="10.8" rx="2" fill="#5d85bb" stroke="#45638c" stroke-width="0.8"/><path d="M14.899999999999999 18.2H18.4V15.899999999999999L22.2 19.4L18.4 22.9V20.599999999999998H14.899999999999999Z" fill="#fff"/></g></g>
<g transform="translate(264,98)"><path d="M2.5 21.5L10 7M10 7H22" stroke="#666" stroke-width="0.9" fill="none"/><circle cx="10" cy="7" r="2.6" fill="#b9dbbb" stroke="#888" stroke-width="0.9"/><path d="M12 22L20 13" stroke="#e7e36a" stroke-width="2.2" opacity="0.8"/><path d="M13 11L21.5 20.5" stroke="#d9a55a" stroke-width="2.6" opacity="0.85"/><path d="M11.5 13.5C11 11 14 9 16 10" fill="none" stroke="#777" stroke-width="1"/></g>
<g transform="translate(302,98)"><rect x="3" y="3.9" width="15" height="14.9" fill="#f3e48b" stroke="#d9b94a" stroke-width="1" stroke-dasharray="1.5 1"/><g opacity="0.62"><rect x="14" y="14.9" width="10" height="10" rx="2" fill="#d8262e" stroke="#a21c22" stroke-width="0.8"/><path d="M16.2 17.099999999999998L21.8 22.7M16.2 22.7L21.8 17.099999999999998" stroke="#fff" stroke-width="1.8"/></g></g>
<g transform="translate(340,98)"><path d="M0.5 5L15 13M0.5 9.5L15 12" stroke="#888" stroke-width="0.9"/><ellipse cx="19" cy="8" rx="3.2" ry="2.4" fill="none" stroke="#d85050" stroke-width="1.6" transform="rotate(-30 19 8)"/><ellipse cx="19" cy="17" rx="3.2" ry="2.4" fill="none" stroke="#d85050" stroke-width="1.6" transform="rotate(30 19 17)"/><path d="M14 12.5L16.5 9.5M14 12.5L16.5 15.5" stroke="#888" stroke-width="1"/></g>
<g transform="translate(378,98)"><g opacity="0.6"><path d="M8 4H16L19.5 7.5V19.5H8Z" fill="#f4f4f4" stroke="#999" stroke-width="0.9"/><path d="M3 7.5H11L14.5 11V21.5H3Z" fill="#f4f4f4" stroke="#888" stroke-width="1"/><path d="M5 13.5H12M5 15.5H12M5 17.5H12M5 19.5H12" stroke="#777" stroke-width="0.7"/></g></g>
<g transform="translate(416,98)"><g opacity="0.7"><rect x="4" y="3" width="16" height="19.8" fill="#f0e6d8" stroke="#d3aa72" stroke-width="1"/><rect x="8.5" y="1.8" width="7.5" height="3.2" rx="1" fill="#f0e6d8" stroke="#d3aa72" stroke-width="0.9"/><path d="M6.5 7.5H15L18 10.5V20.5H6.5Z" fill="#f4f4f4" stroke="#888" stroke-width="0.8"/><path d="M8.5 12.5H16M8.5 14.5H16M8.5 16.5H16M8.5 18.5H16" stroke="#777" stroke-width="0.7"/></g></g>
<rect x="453" y="99" width="2" height="2" fill="#9d9d9d"/><rect x="452.4" y="98.4" width="1.6" height="1.6" fill="#fdfdfd"/><rect x="456" y="102" width="2" height="2" fill="#9d9d9d"/><rect x="455.4" y="101.4" width="1.6" height="1.6" fill="#fdfdfd"/><rect x="453" y="105" width="2" height="2" fill="#9d9d9d"/><rect x="452.4" y="104.4" width="1.6" height="1.6" fill="#fdfdfd"/><rect x="456" y="108" width="2" height="2" fill="#9d9d9d"/><rect x="455.4" y="107.4" width="1.6" height="1.6" fill="#fdfdfd"/><rect x="453" y="111" width="2" height="2" fill="#9d9d9d"/><rect x="452.4" y="110.4" width="1.6" height="1.6" fill="#fdfdfd"/><rect x="456" y="114" width="2" height="2" fill="#9d9d9d"/><rect x="455.4" y="113.4" width="1.6" height="1.6" fill="#fdfdfd"/><rect x="453" y="117" width="2" height="2" fill="#9d9d9d"/><rect x="452.4" y="116.4" width="1.6" height="1.6" fill="#fdfdfd"/><rect x="456" y="120" width="2" height="2" fill="#9d9d9d"/><rect x="455.4" y="119.4" width="1.6" height="1.6" fill="#fdfdfd"/><g transform="translate(462,98)"><path d="M0.7 10L5.2 5H22.0V15.5H5.2Z" fill="#f8e04e" stroke="#cfa800" stroke-width="1"/><text x="5.5" y="13.8" font-family="Liberation Sans" font-weight="bold" font-size="9.5" fill="#2b2b2b" letter-spacing="-0.3">abc</text></g>
<g transform="translate(500,98)"><rect x="1" y="5" width="24" height="17.8" fill="#d7e3f0" stroke="#6b9be0" stroke-width="1.2"/><path d="M2 11L6.5 6H21V16.5H6.5Z" fill="#f8e04e" stroke="#cfa800" stroke-width="1"/><text x="6.8" y="14.8" font-family="Liberation Sans" font-weight="bold" font-size="9.5" fill="#2b2b2b" letter-spacing="-0.3">ab</text><path d="M17.5 12.5V9.5C17.5 8 19 8 19 9.5V14" fill="#fff" stroke="#888" stroke-width="0.7"/><circle cx="19" cy="17.6" r="4.2" fill="#c21d22" stroke="#7a0e10" stroke-width="0.6"/><circle cx="18" cy="16.3" r="1.2" fill="#f08080" opacity="0.8"/></g>
<g transform="translate(538,98)"><g opacity="0.55"><path d="M1 10L5.5 5H22V15.5H5.5Z" fill="#f8e04e" stroke="#cfa800" stroke-width="1"/><text x="5.8" y="13.8" font-family="Liberation Sans" font-weight="bold" font-size="9.5" fill="#2b2b2b" letter-spacing="-0.3">ab</text><path d="M17.5 12V9.5C17.5 8 19 8 19 9.5V14" fill="#fff" stroke="#888" stroke-width="0.7"/><circle cx="19.7" cy="19.2" r="4.6" fill="#b52a2e"/></g></g>
<g transform="translate(576,98)"><g opacity="0.55"><path d="M1 10L5.5 5H21.8V15.5H5.5Z" fill="#f8e04e" stroke="#cfa800" stroke-width="1"/><text x="5.8" y="13.8" font-family="Liberation Sans" font-weight="bold" font-size="9.5" fill="#2b2b2b" letter-spacing="-0.3">abc</text></g><path d="M8.5 20C11 16.5 17 16.5 24.5 20C17 23.5 11 23.5 8.5 20Z" fill="#fff" stroke="#777" stroke-width="0.9"/><circle cx="16" cy="20" r="2.8" fill="#8fb4e0"/><circle cx="16" cy="20" r="1.1" fill="#222"/></g>
<g transform="translate(614,98)"><g opacity="0.55"><path d="M0.8 10L5.3 5H22.0V15.5H5.3Z" fill="#f8e04e" stroke="#cfa800" stroke-width="1"/><text x="5.6" y="13.8" font-family="Liberation Sans" font-weight="bold" font-size="9.5" fill="#2b2b2b" letter-spacing="-0.3">abc</text></g><g opacity="0.75"><rect x="13.8" y="14.1" width="11" height="11" rx="2" fill="#5d85bb" stroke="#45638c" stroke-width="0.8"/><path d="M15.8 18.400000000000002H19.3V16.1L23.1 19.6L19.3 23.1V20.8H15.8Z" fill="#fff"/></g></g>
<g transform="translate(652,98)"><g opacity="0.55"><path d="M1 10L5.5 5H21.8V15.5H5.5Z" fill="#f8e04e" stroke="#cfa800" stroke-width="1"/><text x="5.8" y="13.8" font-family="Liberation Sans" font-weight="bold" font-size="9.5" fill="#2b2b2b" letter-spacing="-0.3">abc</text></g><g opacity="0.75"><rect x="13.7" y="14.1" width="11" height="11" rx="2" fill="#5d85bb" stroke="#45638c" stroke-width="0.8"/><path d="M21.7 18.6A3 3 0 1 0 19.2 22.6" fill="none" stroke="#fff" stroke-width="1.4"/><path d="M20.2 17.1L22.7 17.6L22.2 20.1Z" fill="#fff"/></g></g>
<g transform="translate(690,98)"><g opacity="0.55"><path d="M1.1 10L5.6 5H22.0V15.5H5.6Z" fill="#f8e04e" stroke="#cfa800" stroke-width="1"/><text x="5.9" y="13.8" font-family="Liberation Sans" font-weight="bold" font-size="9.5" fill="#2b2b2b" letter-spacing="-0.3">abc</text></g><g opacity="0.7"><rect x="14.1" y="14.1" width="10.8" height="10.8" rx="2" fill="#d2a81c" stroke="#9d7e15" stroke-width="0.8"/><path d="M16.5 22.5L22.5 16.5" stroke="#fff" stroke-width="2"/></g></g>
<rect x="729" y="99" width="2" height="2" fill="#9d9d9d"/><rect x="728.4" y="98.4" width="1.6" height="1.6" fill="#fdfdfd"/><rect x="732" y="102" width="2" height="2" fill="#9d9d9d"/><rect x="731.4" y="101.4" width="1.6" height="1.6" fill="#fdfdfd"/><rect x="729" y="105" width="2" height="2" fill="#9d9d9d"/><rect x="728.4" y="104.4" width="1.6" height="1.6" fill="#fdfdfd"/><rect x="732" y="108" width="2" height="2" fill="#9d9d9d"/><rect x="731.4" y="107.4" width="1.6" height="1.6" fill="#fdfdfd"/><rect x="729" y="111" width="2" height="2" fill="#9d9d9d"/><rect x="728.4" y="110.4" width="1.6" height="1.6" fill="#fdfdfd"/><rect x="732" y="114" width="2" height="2" fill="#9d9d9d"/><rect x="731.4" y="113.4" width="1.6" height="1.6" fill="#fdfdfd"/><rect x="729" y="117" width="2" height="2" fill="#9d9d9d"/><rect x="728.4" y="116.4" width="1.6" height="1.6" fill="#fdfdfd"/><rect x="732" y="120" width="2" height="2" fill="#9d9d9d"/><rect x="731.4" y="119.4" width="1.6" height="1.6" fill="#fdfdfd"/><rect x="742" y="99" width="2" height="2" fill="#9d9d9d"/><rect x="741.4" y="98.4" width="1.6" height="1.6" fill="#fdfdfd"/><rect x="745" y="102" width="2" height="2" fill="#9d9d9d"/><rect x="744.4" y="101.4" width="1.6" height="1.6" fill="#fdfdfd"/><rect x="742" y="105" width="2" height="2" fill="#9d9d9d"/><rect x="741.4" y="104.4" width="1.6" height="1.6" fill="#fdfdfd"/><rect x="745" y="108" width="2" height="2" fill="#9d9d9d"/><rect x="744.4" y="107.4" width="1.6" height="1.6" fill="#fdfdfd"/><rect x="742" y="111" width="2" height="2" fill="#9d9d9d"/><rect x="741.4" y="110.4" width="1.6" height="1.6" fill="#fdfdfd"/><rect x="745" y="114" width="2" height="2" fill="#9d9d9d"/><rect x="744.4" y="113.4" width="1.6" height="1.6" fill="#fdfdfd"/><rect x="742" y="117" width="2" height="2" fill="#9d9d9d"/><rect x="741.4" y="116.4" width="1.6" height="1.6" fill="#fdfdfd"/><rect x="745" y="120" width="2" height="2" fill="#9d9d9d"/><rect x="744.4" y="119.4" width="1.6" height="1.6" fill="#fdfdfd"/><rect x="64" y="135" width="2" height="2" fill="#9d9d9d"/><rect x="63.4" y="134.4" width="1.6" height="1.6" fill="#fdfdfd"/><rect x="67" y="138" width="2" height="2" fill="#9d9d9d"/><rect x="66.4" y="137.4" width="1.6" height="1.6" fill="#fdfdfd"/><rect x="64" y="141" width="2" height="2" fill="#9d9d9d"/><rect x="63.4" y="140.4" width="1.6" height="1.6" fill="#fdfdfd"/><rect x="67" y="144" width="2" height="2" fill="#9d9d9d"/><rect x="66.4" y="143.4" width="1.6" height="1.6" fill="#fdfdfd"/><rect x="64" y="147" width="2" height="2" fill="#9d9d9d"/><rect x="63.4" y="146.4" width="1.6" height="1.6" fill="#fdfdfd"/><rect x="67" y="150" width="2" height="2" fill="#9d9d9d"/><rect x="66.4" y="149.4" width="1.6" height="1.6" fill="#fdfdfd"/><rect x="64" y="153" width="2" height="2" fill="#9d9d9d"/><rect x="63.4" y="152.4" width="1.6" height="1.6" fill="#fdfdfd"/><rect x="67" y="156" width="2" height="2" fill="#9d9d9d"/><rect x="66.4" y="155.4" width="1.6" height="1.6" fill="#fdfdfd"/><g transform="translate(74,134)"><path d="M2.7 11L10 3.5V8C17 8 21 10.5 21 14.5C21 18 18 20.3 14 20.5V16.5C16 16.3 17 15.5 17 14.5C17 13 14.5 12.5 10 12.5V17.5Z" fill="#bfe0bf" stroke="#9cc89c" stroke-width="0.9"/></g>
<g transform="translate(112,134)"><path d="M21.3 11L14 3.5V8C7 8 3 10.5 3 14.5C3 18 6 20.3 10 20.5V16.5C8 16.3 7 15.5 7 14.5C7 13 9.5 12.5 14 12.5V17.5Z" fill="#bfe0bf" stroke="#9cc89c" stroke-width="0.9"/></g>
<g transform="translate(150,134)"><path d="M1.5 6C1.5 1.8 7 1.6 11 3C14 4 19 1.8 21.5 4.5C23.3 6.8 22.5 10.5 19.5 11.5C15 12.8 11 11.5 7.5 13C3.5 14.5 1.5 10 1.5 6Z" fill="#b9dbbb" stroke="#7a7a7a" stroke-width="1"/><g opacity="0.85"><rect x="12.8" y="13.7" width="11" height="11" rx="2" fill="#5d85bb" stroke="#45638c" stroke-width="0.8"/><path d="M20.8 18.2A3 3 0 1 0 18.3 22.2" fill="none" stroke="#fff" stroke-width="1.4"/><path d="M19.3 16.7L21.8 17.2L21.3 19.7Z" fill="#fff"/></g></g>
<g transform="translate(188,134)"><circle cx="8.2" cy="8.8" r="7.6" fill="#bfe0bf" stroke="#999" stroke-width="0.9"/><path d="M15 9.5L20.5 12.5V19L15 22L9.5 19V12.5Z" fill="#c8d9e8" stroke="#8da5bd" stroke-width="1" transform="translate(0,-0.8) scale(1.05)"/><path d="M8 8C11 6 14 8 15 12V17M13 15L15 17.5L17 15" fill="none" stroke="#666" stroke-width="0.9"/></g>
<g transform="translate(226,134)"><path d="M1.5 6C1.5 1.5 7 1.2 10.5 2.5C13.5 3.5 18.5 1.5 21.5 4.2C23.5 6.5 23 11 19.5 12.2C15 13.5 10.5 11 7 12.5C3 14 1.5 10 1.5 6Z" fill="#b9dbbb" stroke="#7a7a7a" stroke-width="1"/><path d="M4 7C4 4.2 8 3.6 11.5 4.4C14 5 14 8.8 11.5 9.6C8.5 10.5 4 10 4 7Z" fill="#f5f5f5" stroke="#888" stroke-width="0.8"/><g opacity="0.85"><rect x="13" y="13.7" width="11" height="11" rx="2" fill="#d2a81c" stroke="#9d7e15" stroke-width="0.8"/><path d="M18.5 15.6V22.8M15.4 17.4L21.6 21.0M15.4 21.0L21.6 17.4" stroke="#fff" stroke-width="1.3"/><circle cx="18.5" cy="19.2" r="1.3" fill="#d2a81c" stroke="#fff" stroke-width="0.8"/></g></g>
<g transform="translate(264,134)"><path d="M1.5 6C1.5 1.5 7 1.2 10.5 2.5C13.5 3.5 18.5 1.5 21.5 4.2C23.5 6.5 23 11 19.5 12.2C15 13.5 10.5 11 7 12.5C3 14 1.5 10 1.5 6Z" fill="#c6c6c6" stroke="#7a7a7a" stroke-width="1"/><path d="M1.5 22C0.5 18 4 14.5 8 14.3C11 14.2 11 18.5 9.5 21C8 23.5 2.5 24.5 1.5 22Z" fill="#b9dbbb" stroke="#888" stroke-width="0.9"/><g opacity="0.85"><rect x="12.8" y="13.7" width="11" height="11" rx="2" fill="#d2a81c" stroke="#9d7e15" stroke-width="0.8"/><path d="M18.3 15.6V22.8M15.200000000000001 17.4L21.400000000000002 21.0M15.200000000000001 21.0L21.400000000000002 17.4" stroke="#fff" stroke-width="1.3"/><circle cx="18.3" cy="19.2" r="1.3" fill="#d2a81c" stroke="#fff" stroke-width="0.8"/></g></g>
<g transform="translate(302,134)"><path d="M1.5 6C1.5 1.5 7 1.2 10.5 2.5C13.5 3.5 18.5 1.5 21.5 4.2C23.5 6.5 23 11 19.5 12.2C15 13.5 10.5 11 7 12.5C3 14 1.5 10 1.5 6Z" fill="#b9dbbb" stroke="#7a7a7a" stroke-width="1"/><path d="M4 7C4 4.2 8 3.6 11.5 4.4C14 5 14 8.8 11.5 9.6C8.5 10.5 4 10 4 7Z" fill="#f5f5f5" stroke="#888" stroke-width="0.8"/><g opacity="0.6"><rect x="14" y="15.2" width="9.8" height="9.8" rx="2" fill="#d8262e" stroke="#a21c22" stroke-width="0.8"/><path d="M16.099999999999998 17.3L21.7 22.900000000000002M16.099999999999998 22.900000000000002L21.7 17.3" stroke="#fff" stroke-width="1.8"/></g></g>
<g transform="translate(340,134)"><path d="M1.5 6C1.5 1.5 7 1.2 10.5 2.5C13.5 3.5 18.5 1.5 21.5 4.2C23.5 6.5 23 11 19.5 12.2C15 13.5 10.5 11 7 12.5C3 14 1.5 10 1.5 6Z" fill="#c6c6c6" stroke="#7a7a7a" stroke-width="1"/><path d="M1.5 22C0.5 18 4 14.5 8 14.3C11 14.2 11 18.5 9.5 21C8 23.5 2.5 24.5 1.5 22Z" fill="#b9dbbb" stroke="#888" stroke-width="0.9"/><g opacity="0.6"><rect x="13.8" y="15.2" width="10" height="10" rx="2" fill="#d8262e" stroke="#a21c22" stroke-width="0.8"/><path d="M16.0 17.4L21.6 23.0M16.0 23.0L21.6 17.4" stroke="#fff" stroke-width="1.8"/></g></g>
<g transform="translate(378,134)"><path d="M1.5 8C1.5 3 7 2 11 3.5C14.5 4.8 19 2.5 22 5C23.8 7 23 11 20 12C16 13 13 11 10.5 12.5C8 14 6 19 5 19.5C3 17 1.5 12 1.5 8Z" fill="#b9dbbb" stroke="#7a7a7a" stroke-width="1"/><path d="M2.3 11.5C3 14.5 4 17.5 5 19.5C6.5 16.5 8 14 10.5 12.5C7.5 12.2 4.8 12 2.3 11.5Z" fill="#f1e27a" stroke="#a0a070" stroke-width="0.6"/></g>
<g transform="translate(416,134)"><path d="M1 8C1 1.5 8 1 12 2.8C15.5 4.3 21 1.8 23 6C24.5 9.5 23.5 15.5 20 16.5C16 17.5 13 14.5 9.5 16C6 17.5 1 15 1 8Z" fill="#f4e46c" stroke="#777" stroke-width="0.9"/><path d="M4 8C4 4.5 8.5 4 12 5.5C15 6.8 18.5 4.5 20 7.5C21 9.5 20.5 12.5 18.5 13C15.5 13.8 13 12 10 13C7 14 4 12 4 8Z" fill="#bfe0bf" stroke="#999" stroke-width="0.7"/></g>
<g transform="translate(454,134)"><path d="M1.5 6C1.5 2 6 1 9 2.5L11 5L11 14C9 16 3 14 2 11Z" fill="#bfe0bf" stroke="#999" stroke-width="0.9"/><path d="M21 6C21 2 16.5 1 13.5 2.5L12 5V14C14 16 20 14 21 11Z" fill="#bfe0bf" stroke="#999" stroke-width="0.9"/><path d="M11 1V14M12.5 2V14" stroke="#aaa" stroke-width="0.9"/><path d="M10.5 13L7.5 19M12.5 13L15 18.5" stroke="#888" stroke-width="1"/><ellipse cx="7" cy="21" rx="1.8" ry="2.8" fill="none" stroke="#d85050" stroke-width="1.3"/><ellipse cx="15.8" cy="20.5" rx="1.8" ry="2.8" fill="none" stroke="#d85050" stroke-width="1.3" transform="rotate(-25 15.8 20.5)"/></g>
<g transform="translate(492,134)"><path d="M1 6C1 2 5.5 1 8.5 2.5L10.5 4.5V15C8 17 2.5 14.5 1.5 11Z" fill="#bfe0bf" stroke="#999" stroke-width="0.9"/><path d="M23 6C23 2 18.5 1 15.5 2.5L13.5 4.5V15C16 17 21.5 14.5 22.5 11Z" fill="#bfe0bf" stroke="#999" stroke-width="0.9"/><path d="M9.5 5H15M9.5 8H15M9.5 11H15M11 3V14M13 3V14" stroke="#888" stroke-width="0.8"/><path d="M12 15C14 17 9 18 11 20C12.5 21.5 14 22 12.5 24" fill="none" stroke="#888" stroke-width="0.9"/></g>
<g transform="translate(530,134)"><path d="M16.5 1.5H23.5L19 8.5L14.5 10.5L12 13L11 11L13 9Z" fill="#d5d5d5" stroke="#999" stroke-width="0.8"/><path d="M12 14V16" stroke="#bbb"/><rect x="1.5" y="17.5" width="21.5" height="6" fill="#b9cad9" stroke="#7c95ad" stroke-width="0.9"/><path d="M12.3 15L14 18L12.3 21L10.6 18Z" fill="#f2e9a6" stroke="#8c8c8c" stroke-width="0.6"/></g>
<g transform="translate(568,134)"><path d="M4 12A8.5 8.5 0 1 1 18.5 17.5" fill="none" stroke="#7aa6e6" stroke-width="2.6" transform="rotate(200 12 12)"/><path d="M17.5 9.5L23.5 10.5L19.5 15Z" fill="#6a9be0"/></g>
<rect x="605" y="135" width="2" height="2" fill="#9d9d9d"/><rect x="604.4" y="134.4" width="1.6" height="1.6" fill="#fdfdfd"/><rect x="608" y="138" width="2" height="2" fill="#9d9d9d"/><rect x="607.4" y="137.4" width="1.6" height="1.6" fill="#fdfdfd"/><rect x="605" y="141" width="2" height="2" fill="#9d9d9d"/><rect x="604.4" y="140.4" width="1.6" height="1.6" fill="#fdfdfd"/><rect x="608" y="144" width="2" height="2" fill="#9d9d9d"/><rect x="607.4" y="143.4" width="1.6" height="1.6" fill="#fdfdfd"/><rect x="605" y="147" width="2" height="2" fill="#9d9d9d"/><rect x="604.4" y="146.4" width="1.6" height="1.6" fill="#fdfdfd"/><rect x="608" y="150" width="2" height="2" fill="#9d9d9d"/><rect x="607.4" y="149.4" width="1.6" height="1.6" fill="#fdfdfd"/><rect x="605" y="153" width="2" height="2" fill="#9d9d9d"/><rect x="604.4" y="152.4" width="1.6" height="1.6" fill="#fdfdfd"/><rect x="608" y="156" width="2" height="2" fill="#9d9d9d"/><rect x="607.4" y="155.4" width="1.6" height="1.6" fill="#fdfdfd"/><g transform="translate(614,134)"><path d="M11.6 4.6H23.5V23.3H3.4" fill="none" stroke="#8c8c8c" stroke-width="1"/><path d="M1.6 4.3C1.6 2.5 5.2 2.5 5.2 4.3V21.8C5.2 23.8 1.6 23.8 1.6 21.8Z" fill="#f2f2f2" stroke="#8c8c8c" stroke-width="1"/><path d="M8.1 3.3C8.1 1.5 11.6 1.5 11.6 3.3V18.6C11.6 20.5 8.1 20.5 8.1 18.6Z" fill="#f2f2f2" stroke="#8c8c8c" stroke-width="1"/><path d="M5.2 6H8.1" stroke="#8c8c8c" stroke-width="1"/><path d="M15.5 13.8L16.0 5.7M17.5 13.8L18.5 5.2M20.0 13.8L20.5 6.7M22.299999999999997 13.8L23.0 6.2" stroke="#3f9a42" stroke-width="1.1" fill="none" opacity="0.85"/><rect x="14.1" y="14.1" width="10.8" height="10.8" rx="2" fill="#2f4d69" stroke="#23394e" stroke-width="0.8"/><path d="M19.5 20.5V16.0M17.5 18.0L19.5 16.0L21.5 18.0M16.3 19.5V22.5H22.7V19.5" fill="none" stroke="#fff" stroke-width="1.2"/></g>
<g transform="translate(652,134)"><path d="M11.6 4.6H23.5V23.3H3.4" fill="none" stroke="#8c8c8c" stroke-width="1"/><path d="M1.6 4.3C1.6 2.5 5.2 2.5 5.2 4.3V21.8C5.2 23.8 1.6 23.8 1.6 21.8Z" fill="#f2f2f2" stroke="#8c8c8c" stroke-width="1"/><path d="M8.1 3.3C8.1 1.5 11.6 1.5 11.6 3.3V18.6C11.6 20.5 8.1 20.5 8.1 18.6Z" fill="#f2f2f2" stroke="#8c8c8c" stroke-width="1"/><path d="M5.2 6H8.1" stroke="#8c8c8c" stroke-width="1"/><path d="M15.5 13.8L16.0 5.7M17.5 13.8L18.5 5.2M20.0 13.8L20.5 6.7M22.299999999999997 13.8L23.0 6.2" stroke="#3f9a42" stroke-width="1.1" fill="none" opacity="0.85"/><rect x="14.1" y="14.1" width="10.8" height="10.8" rx="2" fill="#d2a81c" stroke="#9d7e15" stroke-width="0.8"/><path d="M19.5 15.9V23.1M16.4 17.7L22.6 21.3M16.4 21.3L22.6 17.7" stroke="#fff" stroke-width="1.3"/><circle cx="19.5" cy="19.5" r="1.3" fill="#d2a81c" stroke="#fff" stroke-width="0.8"/></g>
<g transform="translate(690,134)"><g opacity="0.45"><path d="M11.6 4.6H23.5V23.3H3.4" fill="none" stroke="#8c8c8c" stroke-width="1"/><path d="M1.6 4.3C1.6 2.5 5.2 2.5 5.2 4.3V21.8C5.2 23.8 1.6 23.8 1.6 21.8Z" fill="#f2f2f2" stroke="#8c8c8c" stroke-width="1"/><path d="M8.1 3.3C8.1 1.5 11.6 1.5 11.6 3.3V18.6C11.6 20.5 8.1 20.5 8.1 18.6Z" fill="#f2f2f2" stroke="#8c8c8c" stroke-width="1"/><path d="M5.2 6H8.1" stroke="#8c8c8c" stroke-width="1"/><path d="M15.5 13.8L16.0 5.7M17.5 13.8L18.5 5.2M20.0 13.8L20.5 6.7M22.299999999999997 13.8L23.0 6.2" stroke="#3f9a42" stroke-width="1.1" fill="none" opacity="0.85"/><rect x="14.1" y="14.1" width="10.8" height="10.8" rx="2" fill="#d8262e" stroke="#a21c22" stroke-width="0.8"/><path d="M16.3 19.5H22.7" stroke="#fff" stroke-width="2.2"/></g></g>
<path d="M726.5 131V164" stroke="#555" stroke-width="1" stroke-dasharray="1 2"/>
<g transform="translate(738,134)"><path d="M1.2 11.1V23.7H7.9" fill="none" stroke="#8f8f8f" stroke-width="1"/><rect x="3.1" y="6.3" width="15.4" height="15.1" fill="#ececec" stroke="#9a9a9a" stroke-width="1"/><path d="M4.5 2.3L11.3 14.4L17.4 3.4H22.6" fill="none" stroke="#3c5a78" stroke-width="1.1"/><circle cx="4.5" cy="2.3" r="1.3" fill="#f4f4f4" stroke="#3c5a78" stroke-width="0.9"/><circle cx="11.3" cy="14.4" r="1.3" fill="#f4f4f4" stroke="#3c5a78" stroke-width="0.9"/><circle cx="17.4" cy="3.4" r="1.3" fill="#f4f4f4" stroke="#3c5a78" stroke-width="0.9"/><circle cx="22.6" cy="3.4" r="1.3" fill="#f4f4f4" stroke="#3c5a78" stroke-width="0.9"/><path d="M15.5 18L16 6.5M17.8 18L18.5 8M20 18L20.8 6M22.2 18L22.5 9" stroke="#4f9a4f" stroke-width="1.1" opacity="0.8"/><rect x="15.2" y="14.8" width="9.6" height="9.6" rx="2" fill="#58a058" stroke="#427842" stroke-width="0.8"/><path d="M16.8 19.6H23.2M20.0 16.400000000000002V22.8" stroke="#fff" stroke-width="2.2"/></g>
<g transform="translate(776,134)"><path d="M1.2 11.1V23.7H7.9" fill="none" stroke="#8f8f8f" stroke-width="1"/><rect x="3.1" y="6.3" width="15.4" height="15.1" fill="#ececec" stroke="#9a9a9a" stroke-width="1"/><rect x="8.9" y="1.9" width="11.8" height="11.8" fill="#8fb0cf"/><rect x="8.9" y="1.9" width="3.93" height="3.93" fill="#2c4a66"/><rect x="16.77" y="1.9" width="3.93" height="3.93" fill="#2c4a66"/><rect x="12.83" y="5.83" width="3.93" height="3.93" fill="#2c4a66"/><rect x="8.9" y="9.77" width="3.93" height="3.93" fill="#2c4a66"/><rect x="16.77" y="9.77" width="3.93" height="3.93" fill="#2c4a66"/><path d="M15.5 18L16 6.5M17.8 18L18.5 8M20 18L20.8 6M22.2 18L22.5 9" stroke="#4f9a4f" stroke-width="1.1" opacity="0.8"/><rect x="15.2" y="14.8" width="9.6" height="9.6" rx="2" fill="#58a058" stroke="#427842" stroke-width="0.8"/><path d="M16.8 19.6H23.2M20.0 16.400000000000002V22.8" stroke="#fff" stroke-width="2.2"/></g>
<g transform="translate(814,134)"><path d="M1.2 11.1V23.7H7.9" fill="none" stroke="#8f8f8f" stroke-width="1"/><rect x="3.1" y="6.3" width="15.4" height="15.1" fill="#ececec" stroke="#9a9a9a" stroke-width="1"/><path d="M4.5 2.3L11.3 14.4L17.4 3.4H22.6" fill="none" stroke="#7d93a8" stroke-width="1.1"/><circle cx="4.5" cy="2.3" r="1.3" fill="#f4f4f4" stroke="#7d93a8" stroke-width="0.9"/><circle cx="11.3" cy="14.4" r="1.3" fill="#f4f4f4" stroke="#7d93a8" stroke-width="0.9"/><circle cx="17.4" cy="3.4" r="1.3" fill="#f4f4f4" stroke="#7d93a8" stroke-width="0.9"/><circle cx="22.6" cy="3.4" r="1.3" fill="#f4f4f4" stroke="#7d93a8" stroke-width="0.9"/><path d="M15.5 18L16 6.5M17.8 18L18.5 8M20 18L20.8 6M22.2 18L22.5 9" stroke="#4f9a4f" stroke-width="1.1" opacity="0.5"/><g opacity="0.75"><rect x="15.2" y="14.8" width="9.6" height="9.6" rx="2" fill="#d2a81c" stroke="#9d7e15" stroke-width="0.8"/><path d="M20.0 16.0V23.200000000000003M16.9 17.8L23.1 21.400000000000002M16.9 21.400000000000002L23.1 17.8" stroke="#fff" stroke-width="1.3"/><circle cx="20.0" cy="19.6" r="1.3" fill="#d2a81c" stroke="#fff" stroke-width="0.8"/></g></g>
<g transform="translate(852,134)"><path d="M1.2 11.1V23.7H7.9" fill="none" stroke="#8f8f8f" stroke-width="1"/><rect x="3.1" y="6.3" width="15.4" height="15.1" fill="#ececec" stroke="#9a9a9a" stroke-width="1"/><path d="M4.5 2.3L11.3 14.4L17.4 3.4H22.6" fill="none" stroke="#7d93a8" stroke-width="1.1"/><circle cx="4.5" cy="2.3" r="1.3" fill="#f4f4f4" stroke="#7d93a8" stroke-width="0.9"/><circle cx="11.3" cy="14.4" r="1.3" fill="#f4f4f4" stroke="#7d93a8" stroke-width="0.9"/><circle cx="17.4" cy="3.4" r="1.3" fill="#f4f4f4" stroke="#7d93a8" stroke-width="0.9"/><circle cx="22.6" cy="3.4" r="1.3" fill="#f4f4f4" stroke="#7d93a8" stroke-width="0.9"/><path d="M15.5 18L16 6.5M17.8 18L18.5 8M20 18L20.8 6M22.2 18L22.5 9" stroke="#4f9a4f" stroke-width="1.1" opacity="0.5"/><g opacity="0.75"><rect x="15.2" y="14.8" width="9.6" height="9.6" rx="2" fill="#d2a81c" stroke="#9d7e15" stroke-width="0.8"/><path d="M17.0 22.6L23.0 16.6" stroke="#fff" stroke-width="2"/></g></g>
<g transform="translate(892,134)"><path d="M9 11L18 19.5" stroke="#c89a5a" stroke-width="2.6"/><path d="M4 21.5L9.5 16.5" stroke="#888" stroke-width="3.4" stroke-linecap="round"/><path d="M4 21.5L9.5 16.5" stroke="#ecec5a" stroke-width="2.2" stroke-linecap="round"/><path d="M2.6 10.6L11.5 4.2L13.8 6.4L5 13.5Z" fill="#f0f0f0" stroke="#888" stroke-width="0.9"/><circle cx="5" cy="6.5" r="1.3" fill="#e0a050"/><path d="M14.8 25L15.3 5M16.8 25L18 8M19.2 25L19.5 6M21.4 25L22.2 9" stroke="#5aa05a" stroke-width="1" opacity="0.55"/></g>
<g transform="translate(928,134)"><path d="M5.6 5H20.9V23.2H3.5" fill="none" stroke="#9a9a9a" stroke-width="1"/><path d="M1.5 4C1.5 1.5 5.5 1.5 5.5 4V21.5C5.5 24 1.5 24 1.5 21.5Z" fill="#f2f2f2" stroke="#9a9a9a" stroke-width="1"/><rect x="7" y="8.2" width="11.6" height="11.3" fill="#d6e5f2" stroke="#3b5a76" stroke-width="1" stroke-dasharray="1.6 1.4"/><path d="M16.5 25L17 9M18.5 25L19.5 10M20.8 25L21.3 8.5M23 25L23.5 11" stroke="#5aa05a" stroke-width="1" opacity="0.55"/></g>
<g transform="translate(966,134)"><path d="M5.6 5H20.9V23.2H3.5" fill="none" stroke="#9a9a9a" stroke-width="1"/><path d="M1.5 4C1.5 1.5 5.5 1.5 5.5 4V21.5C5.5 24 1.5 24 1.5 21.5Z" fill="#f2f2f2" stroke="#9a9a9a" stroke-width="1"/><rect x="7" y="8.2" width="11.6" height="11.3" fill="#d6e5f2" stroke="#3b5a76" stroke-width="1" stroke-dasharray="1.6 1.4"/><path d="M16.5 16L17 8M18.5 16L19.5 9M20.8 16L21.3 7.5M23 16L23.5 10" stroke="#5aa05a" stroke-width="1" opacity="0.55"/><g opacity="0.75"><rect x="14.5" y="14.1" width="10.5" height="10.5" rx="2" fill="#d2a81c" stroke="#9d7e15" stroke-width="0.8"/><path d="M16.75 22.35L22.75 16.35" stroke="#fff" stroke-width="2"/></g></g>
<rect x="64" y="172" width="2" height="2" fill="#9d9d9d"/><rect x="63.4" y="171.4" width="1.6" height="1.6" fill="#fdfdfd"/><rect x="67" y="175" width="2" height="2" fill="#9d9d9d"/><rect x="66.4" y="174.4" width="1.6" height="1.6" fill="#fdfdfd"/><rect x="70" y="172" width="2" height="2" fill="#9d9d9d"/><rect x="69.4" y="171.4" width="1.6" height="1.6" fill="#fdfdfd"/><rect x="73" y="175" width="2" height="2" fill="#9d9d9d"/><rect x="72.4" y="174.4" width="1.6" height="1.6" fill="#fdfdfd"/><rect x="76" y="172" width="2" height="2" fill="#9d9d9d"/><rect x="75.4" y="171.4" width="1.6" height="1.6" fill="#fdfdfd"/><rect x="79" y="175" width="2" height="2" fill="#9d9d9d"/><rect x="78.4" y="174.4" width="1.6" height="1.6" fill="#fdfdfd"/><rect x="82" y="172" width="2" height="2" fill="#9d9d9d"/><rect x="81.4" y="171.4" width="1.6" height="1.6" fill="#fdfdfd"/><rect x="85" y="175" width="2" height="2" fill="#9d9d9d"/><rect x="84.4" y="174.4" width="1.6" height="1.6" fill="#fdfdfd"/><rect x="88" y="172" width="2" height="2" fill="#9d9d9d"/><rect x="87.4" y="171.4" width="1.6" height="1.6" fill="#fdfdfd"/><rect x="91" y="175" width="2" height="2" fill="#9d9d9d"/><rect x="90.4" y="174.4" width="1.6" height="1.6" fill="#fdfdfd"/><rect x="94" y="172" width="2" height="2" fill="#9d9d9d"/><rect x="93.4" y="171.4" width="1.6" height="1.6" fill="#fdfdfd"/><rect x="97" y="175" width="2" height="2" fill="#9d9d9d"/><rect x="96.4" y="174.4" width="1.6" height="1.6" fill="#fdfdfd"/><g transform="translate(69,182)"><path d="M2.3 2L8.3 16.4L15.8 2H21.9" fill="none" stroke="#2b4a68" stroke-width="1.2"/><circle cx="2.3" cy="2" r="1.8" fill="#f2f2f2" stroke="#2b4a68" stroke-width="1"/><circle cx="8.3" cy="16.4" r="1.8" fill="#f2f2f2" stroke="#2b4a68" stroke-width="1"/><circle cx="15.8" cy="2" r="1.8" fill="#f2f2f2" stroke="#2b4a68" stroke-width="1"/><circle cx="21.9" cy="2" r="1.8" fill="#f2f2f2" stroke="#2b4a68" stroke-width="1"/><rect x="14.4" y="14" width="9.6" height="9.6" rx="2" fill="#58a058" stroke="#427842" stroke-width="0.8"/><path d="M16.0 18.8H22.4M19.2 15.600000000000001V22.0" stroke="#fff" stroke-width="2.2"/></g>
<g transform="translate(69,220)"><rect x="0" y="0" width="19.8" height="19.3" fill="#7ba4cf"/><rect x="0" y="0" width="6.6" height="6.4" fill="#243f5c"/><rect x="13.2" y="0" width="6.6" height="6.4" fill="#243f5c"/><rect x="6.6" y="6.4" width="6.6" height="6.4" fill="#243f5c"/><rect x="0" y="12.9" width="6.6" height="6.4" fill="#243f5c"/><rect x="14.4" y="15.7" width="9.6" height="9.6" rx="2" fill="#58a058" stroke="#427842" stroke-width="0.8"/><path d="M16.0 20.5H22.4M19.2 17.3V23.7" stroke="#fff" stroke-width="2.2"/></g>
<g transform="translate(69,258)"><path d="M1 5C1 1.5 4 0.5 7 1C9 0 12 0 15 1.5C17.5 3 18 6 17 9C16.5 11 18 12.5 18 14L16.5 14.5C15.5 13 14.5 12 13.5 13V17L12 17.5C10.5 17.5 10.5 16 11 14C10 12 8 11 6 11C6 13 5.5 15 4.5 15C3 15 3 12 3 10C1.5 9 1 7 1 5Z" fill="#6a9ad0" stroke="#2c5a8c" stroke-width="0.9"/><path d="M7 2.5C6 5 6 8 7.5 10M12 3C13.5 5 13.5 9 12.5 12" fill="none" stroke="#2c5a8c" stroke-width="0.8"/><rect x="14.4" y="15.6" width="9.6" height="9.6" rx="2" fill="#58a058" stroke="#427842" stroke-width="0.8"/><path d="M16.0 20.4H22.4M19.2 17.2V23.599999999999998" stroke="#fff" stroke-width="2.2"/></g>
<g transform="translate(69,296)"><path d="M0.5 24C2 18 6 9 13 4C16 2 20 0.5 23 0C22.5 4 20.5 9 16 13C12 16.5 7 18.5 3 19.5Z" fill="#8fb3dc" stroke="#2f5b8c" stroke-width="0.9"/><path d="M1 23.5C6 15 12 8 21 1.5" fill="none" stroke="#2f5b8c" stroke-width="0.8"/><path d="M6 17L10 17M9 13L14 13.5M12 9L17 9.5" stroke="#dbe8f5" stroke-width="0.8"/><rect x="14.4" y="15.2" width="9.6" height="9.6" rx="2" fill="#58a058" stroke="#427842" stroke-width="0.8"/><path d="M16.0 20.0H22.4M19.2 16.8V23.2" stroke="#fff" stroke-width="2.2"/></g>
<g transform="translate(69,334)"><path d="M1 1C6 2 14 5 20 10C23 12.5 24 15 22 16C15 17 7 19 1 22C5 15 5 8 1 1Z" fill="#6a9ad0" stroke="#1f3f66" stroke-width="1"/><path d="M7 3C10 8 10 15 8 19M12 5C15 9 15 14 13 17.5M16.5 7.5C19 10 19 14 17.5 16.5" fill="none" stroke="#1f3f66" stroke-width="0.9"/><rect x="14.4" y="15.7" width="9.6" height="9.6" rx="2" fill="#58a058" stroke="#427842" stroke-width="0.8"/><path d="M16.0 20.5H22.4M19.2 17.3V23.7" stroke="#fff" stroke-width="2.2"/></g>
<g transform="translate(69,370)"><circle cx="11.7" cy="11.3" r="10.3" fill="#bcd3ea" stroke="#6e98c6" stroke-width="1"/><path d="M3 8H20M2 13H21M11.7 1C6 6 6 17 11.7 21.6M11.7 1C17 6 17 17 11.7 21.6" fill="none" stroke="#6e98c6" stroke-width="0.9"/><path d="M6 6L9 5L10 9L7 10Z M13 12L17 13L15 17L12 15Z" fill="#4a6f95" opacity="0.7"/><rect x="14.4" y="17.8" width="9.6" height="9.6" rx="2" fill="#58a058" stroke="#427842" stroke-width="0.8"/><path d="M16.0 22.6H22.4M19.2 19.400000000000002V25.8" stroke="#fff" stroke-width="2.2"/></g>
<g transform="translate(69,408)"><circle cx="11.7" cy="11.3" r="10.3" fill="#233d5a" stroke="#1a2e45" stroke-width="1"/><ellipse cx="11.7" cy="11.3" rx="4.5" ry="10" fill="#5d8dc0"/><path d="M2 8H21.5M1.5 13.5H22" stroke="#fff" stroke-width="1.1"/><rect x="14.4" y="17.9" width="9.6" height="9.6" rx="2" fill="#58a058" stroke="#427842" stroke-width="0.8"/><path d="M16.0 22.7H22.4M19.2 19.5V25.9" stroke="#fff" stroke-width="2.2"/></g>
<g transform="translate(69,447)"><circle cx="11.7" cy="11.3" r="10.3" fill="#d6e4f3" stroke="#6e98c6" stroke-width="1"/><path d="M3 8H20M2 13H21M11.7 1C6 6 6 17 11.7 21.6M11.7 1C17 6 17 17 11.7 21.6" fill="none" stroke="#6e98c6" stroke-width="0.9"/><path d="M3.5 3.5L9.5 18.5L14.5 5.5H20.5" fill="none" stroke="#2d3f52" stroke-width="1.1"/><circle cx="3.5" cy="3.5" r="1.7" fill="#f0f0f0" stroke="#2d3f52" stroke-width="0.9"/><circle cx="9.5" cy="18.5" r="1.7" fill="#f0f0f0" stroke="#2d3f52" stroke-width="0.9"/><circle cx="14.5" cy="5.5" r="1.7" fill="#f0f0f0" stroke="#2d3f52" stroke-width="0.9"/><circle cx="20.5" cy="5.5" r="1.7" fill="#f0f0f0" stroke="#2d3f52" stroke-width="0.9"/><rect x="14.4" y="16.9" width="9.6" height="9.6" rx="2" fill="#58a058" stroke="#427842" stroke-width="0.8"/><path d="M16.0 21.7H22.4M19.2 18.5V24.9" stroke="#fff" stroke-width="2.2"/></g>
<g transform="translate(69,486)"><path d="M8 3C12 2 15 5 13.5 9C12 13 8 16.5 5 18L4 16.5C7 14.5 9 12.5 9 10.5C6 11 3.5 9.5 4 6.5C4.5 4 6 3.3 8 3Z" fill="#2f5b8c"/><rect x="14.4" y="15.3" width="9.6" height="9.6" rx="2" fill="#58a058" stroke="#427842" stroke-width="0.8"/><path d="M16.0 20.1H22.4M19.2 16.900000000000002V23.3" stroke="#fff" stroke-width="2.2"/></g>
<g transform="translate(69,524)"><path d="M1 1.5L8.2 17L14.8 3.5H22.5" fill="none" stroke="#2b4660" stroke-width="1.1"/><circle cx="1" cy="1.5" r="1.7" fill="#f0f0f0" stroke="#2b4660" stroke-width="0.9"/><circle cx="8.2" cy="17" r="1.7" fill="#f0f0f0" stroke="#2b4660" stroke-width="0.9"/><circle cx="14.8" cy="3.5" r="1.7" fill="#f0f0f0" stroke="#2b4660" stroke-width="0.9"/><circle cx="22.5" cy="3.5" r="1.7" fill="#f0f0f0" stroke="#2b4660" stroke-width="0.9"/><rect x="14.4" y="14.9" width="9.6" height="9.6" rx="2" fill="#d2a81c" stroke="#9d7e15" stroke-width="0.8"/><path d="M19.2 16.099999999999998V23.3M16.099999999999998 17.9L22.3 21.5M16.099999999999998 21.5L22.3 17.9" stroke="#fff" stroke-width="1.3"/><circle cx="19.2" cy="19.7" r="1.3" fill="#d2a81c" stroke="#fff" stroke-width="0.8"/></g>
<path d="M94.9 538H102.1L98.5 544Z" fill="#555"/><g transform="translate(69,562)"><rect x="1.2" y="1.9" width="19.6" height="19.6" fill="#efefef" stroke="#666" stroke-width="1"/><rect x="14.9" y="15" width="9.2" height="9.2" rx="2" fill="#e04848" stroke="#a83636" stroke-width="0.8"/><path d="M16.3 19.6H22.7" stroke="#fff" stroke-width="2.2"/></g>
<rect x="64" y="599" width="2" height="2" fill="#9d9d9d"/><rect x="63.4" y="598.4" width="1.6" height="1.6" fill="#fdfdfd"/><rect x="67" y="602" width="2" height="2" fill="#9d9d9d"/><rect x="66.4" y="601.4" width="1.6" height="1.6" fill="#fdfdfd"/><rect x="70" y="599" width="2" height="2" fill="#9d9d9d"/><rect x="69.4" y="598.4" width="1.6" height="1.6" fill="#fdfdfd"/><rect x="73" y="602" width="2" height="2" fill="#9d9d9d"/><rect x="72.4" y="601.4" width="1.6" height="1.6" fill="#fdfdfd"/><rect x="76" y="599" width="2" height="2" fill="#9d9d9d"/><rect x="75.4" y="598.4" width="1.6" height="1.6" fill="#fdfdfd"/><rect x="79" y="602" width="2" height="2" fill="#9d9d9d"/><rect x="78.4" y="601.4" width="1.6" height="1.6" fill="#fdfdfd"/><rect x="82" y="599" width="2" height="2" fill="#9d9d9d"/><rect x="81.4" y="598.4" width="1.6" height="1.6" fill="#fdfdfd"/><rect x="85" y="602" width="2" height="2" fill="#9d9d9d"/><rect x="84.4" y="601.4" width="1.6" height="1.6" fill="#fdfdfd"/><rect x="88" y="599" width="2" height="2" fill="#9d9d9d"/><rect x="87.4" y="598.4" width="1.6" height="1.6" fill="#fdfdfd"/><rect x="91" y="602" width="2" height="2" fill="#9d9d9d"/><rect x="90.4" y="601.4" width="1.6" height="1.6" fill="#fdfdfd"/><rect x="94" y="599" width="2" height="2" fill="#9d9d9d"/><rect x="93.4" y="598.4" width="1.6" height="1.6" fill="#fdfdfd"/><rect x="97" y="602" width="2" height="2" fill="#9d9d9d"/><rect x="96.4" y="601.4" width="1.6" height="1.6" fill="#fdfdfd"/>
<circle cx="115" cy="177" r="6.8" fill="#4b4b4b"/><path d="M112.4 174.4L117.6 179.6M112.4 179.6L117.6 174.4" stroke="#fff" stroke-width="2"/>
<circle cx="135" cy="177" r="6.8" fill="#4b4b4b"/><path d="M133.6 175.4V173.7H138.4V177.3H136.8" fill="none" stroke="#fff" stroke-width="1"/><rect x="131.7" y="175.9" width="5" height="3.9" fill="none" stroke="#fff" stroke-width="1.1"/><path d="M131.7 176.4H136.7" stroke="#fff" stroke-width="1.6"/>
<path d="M112.5 199H121.3L116.9 206Z" fill="#8e8e8e"/>
<rect x="134" y="195.5" width="12.5" height="13" rx="2" fill="url(#chkg)" stroke="#1f2533" stroke-width="1"/><path d="M136.2 201.1L139.3 205.1L147.6 193.7" fill="none" stroke="#111a26" stroke-width="2.2" stroke-linecap="round" stroke-linejoin="round"/>
<path d="M112.5 237H121.3L116.9 244Z" fill="#8e8e8e"/>
<rect x="134" y="233.5" width="12.5" height="13" rx="2" fill="url(#chkg)" stroke="#1f2533" stroke-width="1"/><path d="M136.2 239.1L139.3 243.1L147.6 231.7" fill="none" stroke="#111a26" stroke-width="2.2" stroke-linecap="round" stroke-linejoin="round"/>
<path d="M112.5 275H121.3L116.9 282Z" fill="#8e8e8e"/>
<rect x="134" y="271.5" width="12.5" height="13" rx="2" fill="url(#chkg)" stroke="#1f2533" stroke-width="1"/><path d="M136.2 277.1L139.3 281.1L147.6 269.7" fill="none" stroke="#111a26" stroke-width="2.2" stroke-linecap="round" stroke-linejoin="round"/>
<path d="M112.5 313H121.3L116.9 320Z" fill="#8e8e8e"/>
<rect x="134" y="309.5" width="12.5" height="13" rx="2" fill="url(#chkg)" stroke="#1f2533" stroke-width="1"/><path d="M136.2 315.1L139.3 319.1L147.6 307.7" fill="none" stroke="#111a26" stroke-width="2.2" stroke-linecap="round" stroke-linejoin="round"/>
<g fill="#fff"><circle cx="163.5" cy="206" r="1.1"/><circle cx="165.5" cy="199.5" r="1"/><circle cx="172.5" cy="196.5" r="1"/></g>
<g fill="none" stroke="#777" stroke-width="0.7"><circle cx="163.5" cy="244" r="1.3"/><circle cx="165.5" cy="237.5" r="1.3"/><circle cx="172.5" cy="234.5" r="1.3"/></g>
<path d="M161 275C161 271 166 271 168 272C170 273 173 271 174 273C175.5 275 174.5 280 172 280C169 280 167 280 165 281.5C162 283 161 279 161 275Z" fill="#e0e0e0" stroke="#999" stroke-width="0.8"/>
<path d="M161 309L165.5 322L169 311L175 309" fill="none" stroke="#777" stroke-width="0.8"/><circle cx="161" cy="309" r="1.1" fill="#fff" stroke="#777" stroke-width="0.6"/><circle cx="165.5" cy="322" r="1.1" fill="#fff" stroke="#777" stroke-width="0.6"/><circle cx="169.5" cy="310.5" r="1.1" fill="#fff" stroke="#777" stroke-width="0.6"/><circle cx="175" cy="309" r="1.1" fill="#fff" stroke="#777" stroke-width="0.6"/>
<circle cx="159" cy="221" r="6" fill="#b2262a" stroke="#2a0a0a" stroke-width="1"/>
<circle cx="159" cy="259" r="3" fill="#5fb5a6" stroke="#1e2a28" stroke-width="1"/>
<rect x="151.5" y="289.5" width="15" height="14.5" fill="#f0b0d0" stroke="#333" stroke-width="1"/>
<path d="M151 335.5H167" stroke="#a64dff" stroke-width="1.2"/>
<g transform="translate(1175,1184)"><ellipse cx="6.2" cy="5.4" rx="4.6" ry="3.3" transform="rotate(55 6.2 5.4)" fill="#fff" stroke="#111" stroke-width="1.5"/><path d="M4.8 3.5L7.5 7.5" stroke="#222" stroke-width="1.1"/><circle cx="10.3" cy="13.1" r="4.3" fill="#fff" stroke="#111" stroke-width="1.4"/><circle cx="10.3" cy="13.3" r="1.2" fill="#222"/><circle cx="11.8" cy="2.4" r="0.8" fill="#222"/><circle cx="15.3" cy="2.2" r="0.9" fill="#222"/><circle cx="2.3" cy="13.5" r="0.9" fill="#333"/></g>
<path d="M1717 1192H1724L1720.5 1197Z" fill="#555"/>
<g transform="translate(1736,1184)"><path d="M1.5 16.5C6 14 10 10.5 13.5 6.5C15 4.5 16.2 2.5 17 1.5C16.5 5 14.5 9 11 12.5C8 15.5 4.5 17 1.5 16.5Z" fill="#6e6e68"/><path d="M9 11L11.5 8.5" stroke="#c8c8c0" stroke-width="1"/><circle cx="6.4" cy="6" r="4.3" fill="none" stroke="#e02020" stroke-width="1.3"/><path d="M3.5 3L9.3 9" stroke="#e02020" stroke-width="1.2"/></g>
<rect x="1762" y="1186.5" width="12.5" height="13" rx="2" fill="url(#chkg)" stroke="#1f2533" stroke-width="1"/><path d="M1764.2 1192.1L1767.3 1196.1L1775.6 1184.7" fill="none" stroke="#111a26" stroke-width="2.2" stroke-linecap="round" stroke-linejoin="round"/>
<g transform="translate(1906,1184)"><circle cx="9" cy="9" r="7.5" fill="none" stroke="#8a8a8a" stroke-width="1.6"/><circle cx="9" cy="9" r="4" fill="none" stroke="#8a8a8a" stroke-width="1.2"/><path d="M9 0V18M0 9H18" stroke="#8a8a8a" stroke-width="1.2"/></g>
<g transform="translate(1932,1184)"><path d="M9 2L17 16H1Z" fill="#f4ef9a" stroke="#555" stroke-width="1"/><path d="M9 6.5V11.5" stroke="#111" stroke-width="1.8"/><circle cx="9" cy="13.8" r="1" fill="#111"/></g>
<path d="M1966 1206L1975 1197M1970 1206L1975 1201" stroke="#8a8a8a" stroke-width="1"/>
</svg>
</body></html>
